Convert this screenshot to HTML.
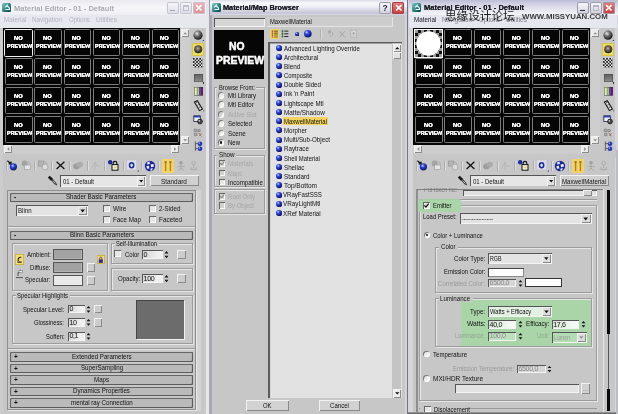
<!DOCTYPE html><html><head><meta charset="utf-8"><title>Material Editor</title><style>
html,body{margin:0;padding:0;}body{width:618px;height:414px;overflow:hidden;position:relative;background:#c7c7c7;font-family:"Liberation Sans","Noto Sans CJK SC",sans-serif;}
#r{position:absolute;left:0;top:0;width:618px;height:414px;overflow:hidden;filter:blur(0.45px);}
#r div,#r svg,#r span{position:absolute;}
.t{white-space:nowrap;transform-origin:0 50%;letter-spacing:0;}
</style></head><body><div id="r">
<div style="left:0px;top:0px;width:208px;height:414px;background:#cccccd;"></div>
<div style="left:3px;top:15px;width:202px;height:399px;background:#c7c7c7;"></div>
<div style="left:0px;top:0px;width:208px;height:15px;background:linear-gradient(#e9e9f0 0%,#f6f6fa 50%,#ededf3 100%);"></div>
<div style="left:2.3px;top:2.6px;width:9px;height:9px;background:linear-gradient(135deg,#7fd0c8,#1c6a68 70%,#0c3c3c);border-radius:1.5px;"></div>
<svg style="left:2.5px;top:3px" width="8.5" height="9" viewBox="0 0 9 9"><path d="M2.2 4.3 L4.5 2 L4.5 3.4 C6.6 3.4 7 4.6 7 6.6 L2.6 6.6" fill="none" stroke="#e8ffff" stroke-width="1.1"/></svg>
<span class="t" style="left:13.8px;top:3.52px;font-size:7.8px;line-height:9.36px;color:#a9a9b3;font-weight:bold;transform:scaleX(0.97);">Material Editor - 01 - Default</span>
<div style="left:167px;top:2px;width:11.6px;height:11.6px;background:linear-gradient(#f8f8fb,#dcdce8);border-radius:2px;box-shadow:inset 0 0 0 1px #c4c4cf;"></div>
<div style="left:169.6px;top:9.6px;width:5px;height:1.6px;background:#a0a0b0;"></div>
<div style="left:180px;top:2px;width:11.6px;height:11.6px;background:linear-gradient(#f8f8fb,#dcdce8);border-radius:2px;box-shadow:inset 0 0 0 1px #c4c4cf;"></div>
<div style="left:182.6px;top:4.6px;width:6.4px;height:6.4px;border:1px solid #c0c0cc;border-top-width:2px;box-sizing:border-box;"></div>
<div style="left:193.3px;top:2px;width:11.6px;height:11.6px;background:linear-gradient(#efb4b8,#e08e94);border-radius:2px;box-shadow:inset 0 0 0 1px #c4c4cf;"></div>
<svg style="left:193.3px;top:2px" width="11.6" height="11.6" viewBox="0 0 12 12"><path d="M3.2 3.2 L8.8 8.8 M8.8 3.2 L3.2 8.8" stroke="#fff" stroke-width="1.7" fill="none"/></svg>
<div style="left:0px;top:15px;width:208px;height:12.8px;background:#e7e7ee;"></div>
<span class="t" style="left:3.6px;top:16.46px;font-size:7.4px;line-height:8.88px;color:#b4b4c0;transform:scaleX(0.85);">Material</span>
<span class="t" style="left:32px;top:16.46px;font-size:7.4px;line-height:8.88px;color:#b4b4c0;transform:scaleX(0.86);">Navigation</span>
<span class="t" style="left:69px;top:16.46px;font-size:7.4px;line-height:8.88px;color:#b4b4c0;transform:scaleX(0.82);">Options</span>
<span class="t" style="left:96px;top:16.46px;font-size:7.4px;line-height:8.88px;color:#b4b4c0;transform:scaleX(0.88);">Utilities</span>
<div style="left:3px;top:28px;width:177px;height:116.6px;background:#050505;"></div>
<div style="left:4.2px;top:28.8px;width:29px;height:28.2px;border:1.3px solid #f0f0f0;box-sizing:border-box;border-radius:1.5px;"></div>
<span class="t" style="left:13.6px;top:35.26px;font-size:5.9px;line-height:7.08px;color:#f6f6f6;font-weight:bold;transform:scaleX(0.99);text-shadow:0 0 0.5px #fff,0 0 0.5px #fff;">NO</span>
<span class="t" style="left:6.6px;top:43.46px;font-size:5.9px;line-height:7.08px;color:#f6f6f6;font-weight:bold;transform:scaleX(0.93);text-shadow:0 0 0.5px #fff,0 0 0.5px #fff;">PREVIEW</span>
<div style="left:34.3px;top:29.3px;width:27.6px;height:27px;border:1px solid #7c7c7c;box-sizing:border-box;border-radius:1.5px;"></div>
<span class="t" style="left:42.9px;top:35.26px;font-size:5.9px;line-height:7.08px;color:#f6f6f6;font-weight:bold;transform:scaleX(0.99);text-shadow:0 0 0.5px #fff,0 0 0.5px #fff;">NO</span>
<span class="t" style="left:35.9px;top:43.46px;font-size:5.9px;line-height:7.08px;color:#f6f6f6;font-weight:bold;transform:scaleX(0.93);text-shadow:0 0 0.5px #fff,0 0 0.5px #fff;">PREVIEW</span>
<div style="left:63.6px;top:29.3px;width:27.6px;height:27px;border:1px solid #7c7c7c;box-sizing:border-box;border-radius:1.5px;"></div>
<span class="t" style="left:72.2px;top:35.26px;font-size:5.9px;line-height:7.08px;color:#f6f6f6;font-weight:bold;transform:scaleX(0.99);text-shadow:0 0 0.5px #fff,0 0 0.5px #fff;">NO</span>
<span class="t" style="left:65.2px;top:43.46px;font-size:5.9px;line-height:7.08px;color:#f6f6f6;font-weight:bold;transform:scaleX(0.93);text-shadow:0 0 0.5px #fff,0 0 0.5px #fff;">PREVIEW</span>
<div style="left:92.9px;top:29.3px;width:27.6px;height:27px;border:1px solid #7c7c7c;box-sizing:border-box;border-radius:1.5px;"></div>
<span class="t" style="left:101.5px;top:35.26px;font-size:5.9px;line-height:7.08px;color:#f6f6f6;font-weight:bold;transform:scaleX(0.99);text-shadow:0 0 0.5px #fff,0 0 0.5px #fff;">NO</span>
<span class="t" style="left:94.5px;top:43.46px;font-size:5.9px;line-height:7.08px;color:#f6f6f6;font-weight:bold;transform:scaleX(0.93);text-shadow:0 0 0.5px #fff,0 0 0.5px #fff;">PREVIEW</span>
<div style="left:122.2px;top:29.3px;width:27.6px;height:27px;border:1px solid #7c7c7c;box-sizing:border-box;border-radius:1.5px;"></div>
<span class="t" style="left:130.8px;top:35.26px;font-size:5.9px;line-height:7.08px;color:#f6f6f6;font-weight:bold;transform:scaleX(0.99);text-shadow:0 0 0.5px #fff,0 0 0.5px #fff;">NO</span>
<span class="t" style="left:123.8px;top:43.46px;font-size:5.9px;line-height:7.08px;color:#f6f6f6;font-weight:bold;transform:scaleX(0.93);text-shadow:0 0 0.5px #fff,0 0 0.5px #fff;">PREVIEW</span>
<div style="left:151.5px;top:29.3px;width:27.6px;height:27px;border:1px solid #7c7c7c;box-sizing:border-box;border-radius:1.5px;"></div>
<span class="t" style="left:160.1px;top:35.26px;font-size:5.9px;line-height:7.08px;color:#f6f6f6;font-weight:bold;transform:scaleX(0.99);text-shadow:0 0 0.5px #fff,0 0 0.5px #fff;">NO</span>
<span class="t" style="left:153.1px;top:43.46px;font-size:5.9px;line-height:7.08px;color:#f6f6f6;font-weight:bold;transform:scaleX(0.93);text-shadow:0 0 0.5px #fff,0 0 0.5px #fff;">PREVIEW</span>
<div style="left:5px;top:58.1px;width:27.6px;height:27px;border:1px solid #7c7c7c;box-sizing:border-box;border-radius:1.5px;"></div>
<span class="t" style="left:13.6px;top:64.06px;font-size:5.9px;line-height:7.08px;color:#f6f6f6;font-weight:bold;transform:scaleX(0.99);text-shadow:0 0 0.5px #fff,0 0 0.5px #fff;">NO</span>
<span class="t" style="left:6.6px;top:72.26px;font-size:5.9px;line-height:7.08px;color:#f6f6f6;font-weight:bold;transform:scaleX(0.93);text-shadow:0 0 0.5px #fff,0 0 0.5px #fff;">PREVIEW</span>
<div style="left:34.3px;top:58.1px;width:27.6px;height:27px;border:1px solid #7c7c7c;box-sizing:border-box;border-radius:1.5px;"></div>
<span class="t" style="left:42.9px;top:64.06px;font-size:5.9px;line-height:7.08px;color:#f6f6f6;font-weight:bold;transform:scaleX(0.99);text-shadow:0 0 0.5px #fff,0 0 0.5px #fff;">NO</span>
<span class="t" style="left:35.9px;top:72.26px;font-size:5.9px;line-height:7.08px;color:#f6f6f6;font-weight:bold;transform:scaleX(0.93);text-shadow:0 0 0.5px #fff,0 0 0.5px #fff;">PREVIEW</span>
<div style="left:63.6px;top:58.1px;width:27.6px;height:27px;border:1px solid #7c7c7c;box-sizing:border-box;border-radius:1.5px;"></div>
<span class="t" style="left:72.2px;top:64.06px;font-size:5.9px;line-height:7.08px;color:#f6f6f6;font-weight:bold;transform:scaleX(0.99);text-shadow:0 0 0.5px #fff,0 0 0.5px #fff;">NO</span>
<span class="t" style="left:65.2px;top:72.26px;font-size:5.9px;line-height:7.08px;color:#f6f6f6;font-weight:bold;transform:scaleX(0.93);text-shadow:0 0 0.5px #fff,0 0 0.5px #fff;">PREVIEW</span>
<div style="left:92.9px;top:58.1px;width:27.6px;height:27px;border:1px solid #7c7c7c;box-sizing:border-box;border-radius:1.5px;"></div>
<span class="t" style="left:101.5px;top:64.06px;font-size:5.9px;line-height:7.08px;color:#f6f6f6;font-weight:bold;transform:scaleX(0.99);text-shadow:0 0 0.5px #fff,0 0 0.5px #fff;">NO</span>
<span class="t" style="left:94.5px;top:72.26px;font-size:5.9px;line-height:7.08px;color:#f6f6f6;font-weight:bold;transform:scaleX(0.93);text-shadow:0 0 0.5px #fff,0 0 0.5px #fff;">PREVIEW</span>
<div style="left:122.2px;top:58.1px;width:27.6px;height:27px;border:1px solid #7c7c7c;box-sizing:border-box;border-radius:1.5px;"></div>
<span class="t" style="left:130.8px;top:64.06px;font-size:5.9px;line-height:7.08px;color:#f6f6f6;font-weight:bold;transform:scaleX(0.99);text-shadow:0 0 0.5px #fff,0 0 0.5px #fff;">NO</span>
<span class="t" style="left:123.8px;top:72.26px;font-size:5.9px;line-height:7.08px;color:#f6f6f6;font-weight:bold;transform:scaleX(0.93);text-shadow:0 0 0.5px #fff,0 0 0.5px #fff;">PREVIEW</span>
<div style="left:151.5px;top:58.1px;width:27.6px;height:27px;border:1px solid #7c7c7c;box-sizing:border-box;border-radius:1.5px;"></div>
<span class="t" style="left:160.1px;top:64.06px;font-size:5.9px;line-height:7.08px;color:#f6f6f6;font-weight:bold;transform:scaleX(0.99);text-shadow:0 0 0.5px #fff,0 0 0.5px #fff;">NO</span>
<span class="t" style="left:153.1px;top:72.26px;font-size:5.9px;line-height:7.08px;color:#f6f6f6;font-weight:bold;transform:scaleX(0.93);text-shadow:0 0 0.5px #fff,0 0 0.5px #fff;">PREVIEW</span>
<div style="left:5px;top:86.9px;width:27.6px;height:27px;border:1px solid #7c7c7c;box-sizing:border-box;border-radius:1.5px;"></div>
<span class="t" style="left:13.6px;top:92.86px;font-size:5.9px;line-height:7.08px;color:#f6f6f6;font-weight:bold;transform:scaleX(0.99);text-shadow:0 0 0.5px #fff,0 0 0.5px #fff;">NO</span>
<span class="t" style="left:6.6px;top:101.06px;font-size:5.9px;line-height:7.08px;color:#f6f6f6;font-weight:bold;transform:scaleX(0.93);text-shadow:0 0 0.5px #fff,0 0 0.5px #fff;">PREVIEW</span>
<div style="left:34.3px;top:86.9px;width:27.6px;height:27px;border:1px solid #7c7c7c;box-sizing:border-box;border-radius:1.5px;"></div>
<span class="t" style="left:42.9px;top:92.86px;font-size:5.9px;line-height:7.08px;color:#f6f6f6;font-weight:bold;transform:scaleX(0.99);text-shadow:0 0 0.5px #fff,0 0 0.5px #fff;">NO</span>
<span class="t" style="left:35.9px;top:101.06px;font-size:5.9px;line-height:7.08px;color:#f6f6f6;font-weight:bold;transform:scaleX(0.93);text-shadow:0 0 0.5px #fff,0 0 0.5px #fff;">PREVIEW</span>
<div style="left:63.6px;top:86.9px;width:27.6px;height:27px;border:1px solid #7c7c7c;box-sizing:border-box;border-radius:1.5px;"></div>
<span class="t" style="left:72.2px;top:92.86px;font-size:5.9px;line-height:7.08px;color:#f6f6f6;font-weight:bold;transform:scaleX(0.99);text-shadow:0 0 0.5px #fff,0 0 0.5px #fff;">NO</span>
<span class="t" style="left:65.2px;top:101.06px;font-size:5.9px;line-height:7.08px;color:#f6f6f6;font-weight:bold;transform:scaleX(0.93);text-shadow:0 0 0.5px #fff,0 0 0.5px #fff;">PREVIEW</span>
<div style="left:92.9px;top:86.9px;width:27.6px;height:27px;border:1px solid #7c7c7c;box-sizing:border-box;border-radius:1.5px;"></div>
<span class="t" style="left:101.5px;top:92.86px;font-size:5.9px;line-height:7.08px;color:#f6f6f6;font-weight:bold;transform:scaleX(0.99);text-shadow:0 0 0.5px #fff,0 0 0.5px #fff;">NO</span>
<span class="t" style="left:94.5px;top:101.06px;font-size:5.9px;line-height:7.08px;color:#f6f6f6;font-weight:bold;transform:scaleX(0.93);text-shadow:0 0 0.5px #fff,0 0 0.5px #fff;">PREVIEW</span>
<div style="left:122.2px;top:86.9px;width:27.6px;height:27px;border:1px solid #7c7c7c;box-sizing:border-box;border-radius:1.5px;"></div>
<span class="t" style="left:130.8px;top:92.86px;font-size:5.9px;line-height:7.08px;color:#f6f6f6;font-weight:bold;transform:scaleX(0.99);text-shadow:0 0 0.5px #fff,0 0 0.5px #fff;">NO</span>
<span class="t" style="left:123.8px;top:101.06px;font-size:5.9px;line-height:7.08px;color:#f6f6f6;font-weight:bold;transform:scaleX(0.93);text-shadow:0 0 0.5px #fff,0 0 0.5px #fff;">PREVIEW</span>
<div style="left:151.5px;top:86.9px;width:27.6px;height:27px;border:1px solid #7c7c7c;box-sizing:border-box;border-radius:1.5px;"></div>
<span class="t" style="left:160.1px;top:92.86px;font-size:5.9px;line-height:7.08px;color:#f6f6f6;font-weight:bold;transform:scaleX(0.99);text-shadow:0 0 0.5px #fff,0 0 0.5px #fff;">NO</span>
<span class="t" style="left:153.1px;top:101.06px;font-size:5.9px;line-height:7.08px;color:#f6f6f6;font-weight:bold;transform:scaleX(0.93);text-shadow:0 0 0.5px #fff,0 0 0.5px #fff;">PREVIEW</span>
<div style="left:5px;top:115.7px;width:27.6px;height:27px;border:1px solid #7c7c7c;box-sizing:border-box;border-radius:1.5px;"></div>
<span class="t" style="left:13.6px;top:121.66px;font-size:5.9px;line-height:7.08px;color:#f6f6f6;font-weight:bold;transform:scaleX(0.99);text-shadow:0 0 0.5px #fff,0 0 0.5px #fff;">NO</span>
<span class="t" style="left:6.6px;top:129.86px;font-size:5.9px;line-height:7.08px;color:#f6f6f6;font-weight:bold;transform:scaleX(0.93);text-shadow:0 0 0.5px #fff,0 0 0.5px #fff;">PREVIEW</span>
<div style="left:34.3px;top:115.7px;width:27.6px;height:27px;border:1px solid #7c7c7c;box-sizing:border-box;border-radius:1.5px;"></div>
<span class="t" style="left:42.9px;top:121.66px;font-size:5.9px;line-height:7.08px;color:#f6f6f6;font-weight:bold;transform:scaleX(0.99);text-shadow:0 0 0.5px #fff,0 0 0.5px #fff;">NO</span>
<span class="t" style="left:35.9px;top:129.86px;font-size:5.9px;line-height:7.08px;color:#f6f6f6;font-weight:bold;transform:scaleX(0.93);text-shadow:0 0 0.5px #fff,0 0 0.5px #fff;">PREVIEW</span>
<div style="left:63.6px;top:115.7px;width:27.6px;height:27px;border:1px solid #7c7c7c;box-sizing:border-box;border-radius:1.5px;"></div>
<span class="t" style="left:72.2px;top:121.66px;font-size:5.9px;line-height:7.08px;color:#f6f6f6;font-weight:bold;transform:scaleX(0.99);text-shadow:0 0 0.5px #fff,0 0 0.5px #fff;">NO</span>
<span class="t" style="left:65.2px;top:129.86px;font-size:5.9px;line-height:7.08px;color:#f6f6f6;font-weight:bold;transform:scaleX(0.93);text-shadow:0 0 0.5px #fff,0 0 0.5px #fff;">PREVIEW</span>
<div style="left:92.9px;top:115.7px;width:27.6px;height:27px;border:1px solid #7c7c7c;box-sizing:border-box;border-radius:1.5px;"></div>
<span class="t" style="left:101.5px;top:121.66px;font-size:5.9px;line-height:7.08px;color:#f6f6f6;font-weight:bold;transform:scaleX(0.99);text-shadow:0 0 0.5px #fff,0 0 0.5px #fff;">NO</span>
<span class="t" style="left:94.5px;top:129.86px;font-size:5.9px;line-height:7.08px;color:#f6f6f6;font-weight:bold;transform:scaleX(0.93);text-shadow:0 0 0.5px #fff,0 0 0.5px #fff;">PREVIEW</span>
<div style="left:122.2px;top:115.7px;width:27.6px;height:27px;border:1px solid #7c7c7c;box-sizing:border-box;border-radius:1.5px;"></div>
<span class="t" style="left:130.8px;top:121.66px;font-size:5.9px;line-height:7.08px;color:#f6f6f6;font-weight:bold;transform:scaleX(0.99);text-shadow:0 0 0.5px #fff,0 0 0.5px #fff;">NO</span>
<span class="t" style="left:123.8px;top:129.86px;font-size:5.9px;line-height:7.08px;color:#f6f6f6;font-weight:bold;transform:scaleX(0.93);text-shadow:0 0 0.5px #fff,0 0 0.5px #fff;">PREVIEW</span>
<div style="left:151.5px;top:115.7px;width:27.6px;height:27px;border:1px solid #7c7c7c;box-sizing:border-box;border-radius:1.5px;"></div>
<span class="t" style="left:160.1px;top:121.66px;font-size:5.9px;line-height:7.08px;color:#f6f6f6;font-weight:bold;transform:scaleX(0.99);text-shadow:0 0 0.5px #fff,0 0 0.5px #fff;">NO</span>
<span class="t" style="left:153.1px;top:129.86px;font-size:5.9px;line-height:7.08px;color:#f6f6f6;font-weight:bold;transform:scaleX(0.93);text-shadow:0 0 0.5px #fff,0 0 0.5px #fff;">PREVIEW</span>
<div style="left:3px;top:144.6px;width:203px;height:13px;background:#c7c7c7;"></div>
<div style="left:180.6px;top:28px;width:9px;height:116.6px;background:#cecece;"></div>
<div style="left:181px;top:29px;width:8.4px;height:8.4px;background:#ececec;box-shadow:inset 1px 1px 0 #f2f2f2,inset -1px -1px 0 #8a8a8a;"></div>
<div style="left:181px;top:136px;width:8.4px;height:8.4px;background:#ececec;box-shadow:inset 1px 1px 0 #f2f2f2,inset -1px -1px 0 #8a8a8a;"></div>
<svg style="left:181px;top:29px" width="8.4" height="8.4" viewBox="0 0 8 8"><path d="M2.2 5 L4 3 L5.8 5Z" fill="#888"/></svg>
<svg style="left:181px;top:136px" width="8.4" height="8.4" viewBox="0 0 8 8"><path d="M2.2 3 L4 5 L5.8 3Z" fill="#888"/></svg>
<div style="left:3px;top:145px;width:177px;height:8.6px;background:#cdcdcd;"></div>
<div style="left:4px;top:145.2px;width:8.4px;height:8.2px;background:#ececec;box-shadow:inset 1px 1px 0 #f2f2f2,inset -1px -1px 0 #8a8a8a;"></div>
<div style="left:171px;top:145.2px;width:8.4px;height:8.2px;background:#ececec;box-shadow:inset 1px 1px 0 #f2f2f2,inset -1px -1px 0 #8a8a8a;"></div>
<svg style="left:4px;top:145.2px" width="8.4" height="8.2" viewBox="0 0 8 8"><path d="M5 2.2 L3 4 L5 5.8Z" fill="#888"/></svg>
<svg style="left:171px;top:145.2px" width="8.4" height="8.2" viewBox="0 0 8 8"><path d="M3 2.2 L5 4 L3 5.8Z" fill="#888"/></svg>
<svg style="left:191.5px;top:29.5px" width="14" height="14" viewBox="0 0 14 14"><defs><radialGradient id="sg0" cx="0.38" cy="0.32" r="0.7"><stop offset="0" stop-color="#e8e8e8"/><stop offset="0.45" stop-color="#6a6a6a"/><stop offset="1" stop-color="#161616"/></radialGradient></defs><circle cx="6" cy="5.2" r="4.6" fill="url(#sg0)"/><path d="M10.4 11 L11.8 11 L11.8 9.6Z" fill="#222"/></svg>
<div style="left:191.8px;top:43.2px;width:12.4px;height:12.4px;background:#eadf64;box-shadow:inset 0 0 0 1px #d4c440;border-radius:1px;"></div>
<svg style="left:191.8px;top:43px" width="13" height="13" viewBox="0 0 13 13"><defs><radialGradient id="sh0" cx="0.45" cy="0.4" r="0.65"><stop offset="0" stop-color="#c8a890"/><stop offset="0.5" stop-color="#5a5050"/><stop offset="1" stop-color="#141414"/></radialGradient></defs><circle cx="6.2" cy="6.2" r="4" fill="url(#sh0)"/></svg>
<svg style="left:193.3px;top:58.2px" width="9.6" height="9.6" viewBox="0 0 12 12"><defs><pattern id="cb0" width="4" height="4" patternUnits="userSpaceOnUse"><rect width="4" height="4" fill="#f4f4f4"/><rect width="2" height="2" fill="#111"/><rect x="2" y="2" width="2" height="2" fill="#111"/></pattern></defs><rect width="12" height="12" fill="url(#cb0)"/></svg>
<div style="left:193.5px;top:74px;width:9.6px;height:7.6px;background:linear-gradient(#5e5e5e,#8e8e8e);box-shadow:inset 0 0 0 0.6px #4a4a4a;"></div>
<div style="left:203.1px;top:82.4px;width:1.4px;height:1.4px;background:#333;"></div>
<svg style="left:193.5px;top:87.4px" width="9.6" height="8.6" viewBox="0 0 12 11"><rect width="12" height="11" fill="#333"/><rect x="0.5" y="0.5" width="2" height="10" fill="#e8e8d0"/><rect x="2.5" y="0.5" width="2" height="10" fill="#d8e070"/><rect x="4.5" y="0.5" width="2" height="10" fill="#70d890"/><rect x="6.5" y="0.5" width="2.5" height="10" fill="#8830a0"/><rect x="9" y="0.5" width="2.5" height="10" fill="#5a2078"/></svg>
<svg style="left:192.5px;top:100px" width="12" height="12" viewBox="0 0 14 14"><path d="M1.6 2.4 L5 0.8 L11 10.6 L7.6 12.4Z" fill="#e8e8e8" stroke="#181818" stroke-width="1.3"/><path d="M3.6 3.4 L5 2.8 M5.2 6 L6.6 5.4 M6.8 8.6 L8.2 8" stroke="#181818" stroke-width="1"/><path d="M11.6 13.2 L13 13.2 L13 11.8Z" fill="#222"/></svg>
<svg style="left:193.3px;top:115.4px" width="10.6" height="9.8" viewBox="0 0 13 12"><rect x="1" y="1" width="8" height="7" fill="#eef" stroke="#223" stroke-width="1"/><rect x="1" y="1" width="8" height="2" fill="#2840b0"/><circle cx="8.6" cy="8" r="3" fill="#444" stroke="#111" stroke-width="0.8"/><circle cx="7.8" cy="7.2" r="1" fill="#ccc"/></svg>
<svg style="left:193.3px;top:128.4px" width="10.4" height="9.6" viewBox="0 0 13 12"><path d="M1.5 1.5 h3 v3 h-3z M6 2 h3 v2.4 h-3z M2 6.6 h3 v3 h-3z" fill="#b8b8b8" stroke="#666" stroke-width="0.7"/><path d="M7 6 L10.6 10.6 M10.6 6.6 L8 9.6" stroke="#a04848" stroke-width="0.9"/></svg>
<svg style="left:192px;top:139.5px" width="12" height="13" viewBox="0 0 12 13"><path d="M3.4 1.5 V11 M3.4 3.6 H7 M3.4 8.6 H7" stroke="#555" stroke-width="0.9" fill="none"/><circle cx="8" cy="3.8" r="2.3" fill="#2036c0"/><circle cx="8" cy="8.8" r="2.3" fill="#2036c0"/><circle cx="7.3" cy="3.1" r="0.8" fill="#a8b4ff"/><circle cx="7.3" cy="8.1" r="0.8" fill="#a8b4ff"/></svg>
<div style="left:6px;top:160.6px;width:1px;height:10px;background:#aeaeae;"></div>
<div style="left:7px;top:160.6px;width:1px;height:10px;background:#dcdcdc;"></div>
<svg style="left:5.5px;top:158.5px" width="13" height="14" viewBox="0 0 13 14"><defs><radialGradient id="bs0" cx="0.4" cy="0.35" r="0.7"><stop offset="0" stop-color="#b8c8ff"/><stop offset="0.4" stop-color="#2440d8"/><stop offset="1" stop-color="#0a1260"/></radialGradient></defs><circle cx="7.4" cy="7.8" r="3.6" fill="url(#bs0)"/><path d="M1.4 1.8 L4.8 4.8 M5 2.6 L5 5 L2.6 5" stroke="#111" stroke-width="1.2" fill="none"/></svg>
<svg style="left:19.5px;top:159px" width="13" height="13" viewBox="0 0 13 13"><circle cx="4.6" cy="4.4" r="3" fill="#a4a4a4"/><rect x="4.6" y="6" width="6" height="4.6" fill="#e4e4e4" stroke="#a0a0a0" stroke-width="0.7"/><path d="M8 2.4 L10.6 5" stroke="#a0a0a0" stroke-width="1"/></svg>
<div style="left:33.5px;top:160.6px;width:1px;height:10px;background:#aeaeae;"></div>
<div style="left:34.5px;top:160.6px;width:1px;height:10px;background:#dcdcdc;"></div>
<svg style="left:36.5px;top:159px" width="13" height="13" viewBox="0 0 13 13"><rect x="1.4" y="2" width="5" height="5" fill="#b4b4b4" stroke="#999" stroke-width="0.7"/><circle cx="8" cy="8" r="3" fill="#dcdcdc" stroke="#a0a0a0" stroke-width="0.8"/><path d="M6.4 2.6 C9 2.6 9.6 4 9.4 5.4" stroke="#a0a0a0" stroke-width="0.8" fill="none"/></svg>
<div style="left:51px;top:160.6px;width:1px;height:10px;background:#aeaeae;"></div>
<div style="left:52px;top:160.6px;width:1px;height:10px;background:#dcdcdc;"></div>
<svg style="left:54.5px;top:160px" width="11" height="11" viewBox="0 0 11 11"><path d="M1.6 1.8 L9.4 9 M9.4 1.8 L1.6 9" stroke="#111" stroke-width="1.25"/></svg>
<div style="left:69px;top:160.6px;width:1px;height:10px;background:#aeaeae;"></div>
<div style="left:70px;top:160.6px;width:1px;height:10px;background:#dcdcdc;"></div>
<svg style="left:72px;top:160px" width="12" height="11" viewBox="0 0 12 11"><ellipse cx="4.4" cy="6.4" rx="3.2" ry="2.8" fill="#9c9c9c"/><ellipse cx="7.6" cy="4.6" rx="3.2" ry="2.8" fill="#aaaaaa"/></svg>
<div style="left:87px;top:160.6px;width:1px;height:10px;background:#aeaeae;"></div>
<div style="left:88px;top:160.6px;width:1px;height:10px;background:#dcdcdc;"></div>
<svg style="left:90px;top:160px" width="12" height="11" viewBox="0 0 12 11"><path d="M1.4 9 L5 2 L7 6 L10.4 6 M5 2 L5 9.6" stroke="#b4b4b4" stroke-width="0.9" fill="none"/></svg>
<div style="left:104px;top:160.6px;width:1px;height:10px;background:#aeaeae;"></div>
<div style="left:105px;top:160.6px;width:1px;height:10px;background:#dcdcdc;"></div>
<svg style="left:107px;top:159px" width="13" height="13" viewBox="0 0 13 13"><circle cx="3.2" cy="3.2" r="2.2" fill="#1a2a9c"/><rect x="5" y="5.6" width="6" height="5.6" fill="#f4f4f4" stroke="#111" stroke-width="1"/><path d="M6.2 5.6 V4 C6.2 1.8 9.8 1.8 9.8 4 V5.6" stroke="#111" stroke-width="1.1" fill="none"/><rect x="6.6" y="7.4" width="3" height="2" fill="#e8d060"/></svg>
<div style="left:123px;top:160.6px;width:1px;height:10px;background:#aeaeae;"></div>
<div style="left:124px;top:160.6px;width:1px;height:10px;background:#dcdcdc;"></div>
<svg style="left:126px;top:159px" width="14" height="13" viewBox="0 0 14 13"><rect x="0.6" y="1" width="10" height="10" fill="#dedee8" stroke="#c0c0cc" stroke-width="0.6"/><ellipse cx="5.6" cy="6.2" rx="2.1" ry="2.5" fill="none" stroke="#1a2a9c" stroke-width="1.5"/><path d="M11.4 12.4 L12.8 12.4 L12.8 11Z" fill="#222"/></svg>
<div style="left:141px;top:160.6px;width:1px;height:10px;background:#aeaeae;"></div>
<div style="left:142px;top:160.6px;width:1px;height:10px;background:#dcdcdc;"></div>
<svg style="left:143.5px;top:159.5px" width="12" height="12" viewBox="0 0 12 12"><circle cx="6" cy="6" r="5.2" fill="#1c2aa0"/><path d="M3 2.4 L5.6 1.6 L5.8 4 L3.4 4.6Z M6.6 4.6 L9.4 4 L10 6.4 L7 7.2Z M2.4 6.2 L4.8 5.8 L5.4 8.6 L3 8.8Z M6.6 8.6 L8.8 8.2 L8 10.4 L6.4 10.8Z" fill="#f0f0ff"/></svg>
<div style="left:158px;top:160.6px;width:1px;height:10px;background:#aeaeae;"></div>
<div style="left:159px;top:160.6px;width:1px;height:10px;background:#dcdcdc;"></div>
<div style="left:161.6px;top:158.6px;width:12px;height:14px;background:#f3d368;"></div>
<svg style="left:161.6px;top:158.6px" width="12" height="14" viewBox="0 0 12 14"><path d="M3.6 2.6 V12 M8.4 2.6 V12" stroke="#b08418" stroke-width="1.4"/><path d="M2.4 3 H4.8 M7.2 3 H9.6" stroke="#7a5a10" stroke-width="1"/></svg>
<svg style="left:175.5px;top:159.5px" width="11" height="12" viewBox="0 0 11 12"><circle cx="5" cy="2.8" r="1.8" fill="#a0a0a0"/><path d="M5 4.6 V8 M5 8 L2.4 10.8 M5 8 L8 10.6 M1.6 6.4 H8.8" stroke="#a8a8a8" stroke-width="1" fill="none"/></svg>
<svg style="left:188px;top:159.5px" width="11" height="12" viewBox="0 0 11 12"><circle cx="5.6" cy="3" r="1.8" fill="none" stroke="#aaa" stroke-width="0.9"/><path d="M5.6 5 V8 M1.6 9.4 H9.6 M3 7 C3 11 8.4 11 8.4 7" stroke="#aaa" stroke-width="0.9" fill="none"/></svg>
<svg style="left:46.5px;top:175px" width="11" height="12" viewBox="0 0 11 12"><path d="M0.8 2.6 L2.8 0.8 L6.2 4 L4.2 6Z" fill="#1a1a1a"/><path d="M4.8 4.6 L8.8 9" stroke="#3a3a3a" stroke-width="2.2"/><path d="M5.8 5.6 L8.4 8.4" stroke="#e4e4e4" stroke-width="0.8"/><path d="M8.6 8.8 L9.9 10.2" stroke="#333" stroke-width="1.1"/></svg>
<div style="left:60px;top:175px;width:86px;height:12px;background:#e6e6e6;box-shadow:inset 1px 1px 0 #555,inset -1px -1px 0 #f4f4f4;"></div>
<span class="t" style="left:62.5px;top:176.64px;font-size:7.6px;line-height:9.12px;color:#111;transform:scaleX(0.79);">01 - Default</span>
<div style="left:137px;top:176px;width:8.4px;height:10px;background:#e2e2e2;box-shadow:inset 1px 1px 0 #f2f2f2,inset -1px -1px 0 #8a8a8a;"></div>
<svg style="left:137px;top:176px" width="8.4" height="10" viewBox="0 0 8 10"><path d="M2 4 L6 4 L4 6.6Z" fill="#111"/></svg>
<div style="left:149.7px;top:175.4px;width:49px;height:11px;background:#d0d0d0;box-shadow:inset 1px 1px 0 #f2f2f2,inset -1px -1px 0 #8a8a8a;"></div>
<span class="t" style="left:161.2px;top:176.54px;font-size:7.6px;line-height:9.12px;color:#111;transform:scaleX(0.84);">Standard</span>
<div style="left:6.6px;top:189.5px;width:189px;height:220px;border:1px solid #8e8e8e;box-sizing:border-box;box-shadow:1px 1px 0 #e8e8e8;"></div>
<div style="left:196.5px;top:189.5px;width:4px;height:221px;background:#d4d4d4;"></div>
<div style="left:10px;top:192.6px;width:183.4px;height:9.2px;background:#bababa;box-shadow:inset 1.1px 1.1px 0 #666,inset -1.1px -1.1px 0 #5c5c5c;border-radius:1px;"></div>
<span class="t" style="left:66.42px;top:192.94px;font-size:7.1px;line-height:8.52px;color:#111;transform:scaleX(0.87);">Shader Basic Parameters</span>
<span class="t" style="left:14px;top:193.3px;font-size:6.5px;line-height:7.8px;color:#111;font-weight:bold;">-</span>
<div style="left:16px;top:205px;width:72px;height:11.4px;background:#e4e4e4;box-shadow:inset 1px 1px 0 #555,inset -1px -1px 0 #f4f4f4;"></div>
<span class="t" style="left:18px;top:206.34px;font-size:7.6px;line-height:9.12px;color:#111;transform:scaleX(0.8);">Blinn</span>
<div style="left:77.6px;top:206px;width:9.4px;height:9.4px;background:#dcdcdc;box-shadow:inset 1px 1px 0 #f2f2f2,inset -1px -1px 0 #8a8a8a;"></div>
<svg style="left:77.6px;top:206px" width="9.4" height="9.4" viewBox="0 0 8 8"><path d="M2 3 L6 3 L4 5.6Z" fill="#111"/></svg>
<div style="left:103px;top:204.6px;width:7px;height:7px;background:#e6e6e6;box-shadow:inset 1px 1px 0 #666,inset -1px -1px 0 #fafafa;"></div>
<span class="t" style="left:113px;top:204.04px;font-size:7.6px;line-height:9.12px;color:#111;transform:scaleX(0.86);">Wire</span>
<div style="left:149px;top:204.6px;width:7px;height:7px;background:#e6e6e6;box-shadow:inset 1px 1px 0 #666,inset -1px -1px 0 #fafafa;"></div>
<span class="t" style="left:158.5px;top:204.04px;font-size:7.6px;line-height:9.12px;color:#111;transform:scaleX(0.82);">2-Sided</span>
<div style="left:103px;top:215.8px;width:7px;height:7px;background:#e6e6e6;box-shadow:inset 1px 1px 0 #666,inset -1px -1px 0 #fafafa;"></div>
<span class="t" style="left:113px;top:215.24px;font-size:7.6px;line-height:9.12px;color:#111;transform:scaleX(0.83);">Face Map</span>
<div style="left:149px;top:215.8px;width:7px;height:7px;background:#e6e6e6;box-shadow:inset 1px 1px 0 #666,inset -1px -1px 0 #fafafa;"></div>
<span class="t" style="left:158.5px;top:215.24px;font-size:7.6px;line-height:9.12px;color:#111;transform:scaleX(0.84);">Faceted</span>
<div style="left:8px;top:226.4px;width:187px;height:1px;background:#9a9a9a;"></div>
<div style="left:8px;top:227.4px;width:187px;height:1px;background:#e6e6e6;"></div>
<div style="left:10px;top:230.6px;width:183.4px;height:9.2px;background:#bababa;box-shadow:inset 1.1px 1.1px 0 #666,inset -1.1px -1.1px 0 #5c5c5c;border-radius:1px;"></div>
<span class="t" style="left:69.52px;top:230.94px;font-size:7.1px;line-height:8.52px;color:#111;transform:scaleX(0.87);">Blinn Basic Parameters</span>
<span class="t" style="left:14px;top:231.3px;font-size:6.5px;line-height:7.8px;color:#111;font-weight:bold;">-</span>
<div style="left:12px;top:243px;width:96px;height:48px;border:1px solid #9c9c9c;box-sizing:border-box;box-shadow:1px 1px 0 #e6e6e6, inset 1px 1px 0 #e6e6e6;"></div>
<div style="left:15px;top:253.6px;width:8.6px;height:11.6px;background:#f4de74;box-shadow:inset 0 0 0 0.7px #c8a838;"></div>
<svg style="left:15px;top:253.6px" width="8.6" height="11.4" viewBox="0 0 9 11"><path d="M6.6 3 C3.6 2.6 3 5 3.4 7 M2.6 8 H7" stroke="#222" stroke-width="1.2" fill="none"/></svg>
<svg style="left:14.6px;top:268px" width="9" height="12" viewBox="0 0 9 12"><path d="M5.6 1.6 V4.6 H3 V8 M1 9.6 H8" stroke="#555" stroke-width="1" fill="none"/><rect x="4" y="2.4" width="3.4" height="2.4" fill="#eee" stroke="#666" stroke-width="0.5"/></svg>
<span class="t" style="left:26.6px;top:249.84px;font-size:7.6px;line-height:9.12px;color:#111;transform:scaleX(0.8);">Ambient:</span>
<span class="t" style="left:30.1px;top:262.64px;font-size:7.6px;line-height:9.12px;color:#111;transform:scaleX(0.8);">Diffuse:</span>
<span class="t" style="left:25.1px;top:274.94px;font-size:7.6px;line-height:9.12px;color:#111;transform:scaleX(0.79);">Specular:</span>
<div style="left:53.3px;top:249px;width:30px;height:11px;background:#a2a2a2;box-shadow:inset 0 0 0 1px #555, inset -1.6px -1.6px 0 0 rgba(255,255,255,.35);"></div>
<div style="left:53.3px;top:261.8px;width:30px;height:11px;background:#a2a2a2;box-shadow:inset 0 0 0 1px #555, inset -1.6px -1.6px 0 0 rgba(255,255,255,.35);"></div>
<div style="left:53.3px;top:275px;width:30px;height:11px;background:#e9e9e9;box-shadow:inset 0 0 0 1px #555, inset -1.6px -1.6px 0 0 rgba(255,255,255,.35);"></div>
<div style="left:87px;top:263.2px;width:7.6px;height:9px;background:#cccccc;box-shadow:inset 1px 1px 0 #f2f2f2,inset -1px -1px 0 #8a8a8a;"></div>
<div style="left:87px;top:276.4px;width:7.6px;height:9px;background:#cccccc;box-shadow:inset 1px 1px 0 #f2f2f2,inset -1px -1px 0 #8a8a8a;"></div>
<div style="left:96.8px;top:255px;width:8.4px;height:9px;background:#f4de74;box-shadow:inset 0 0 0 0.7px #c8a838;"></div>
<svg style="left:97.2px;top:254.8px" width="7.6" height="9.4" viewBox="0 0 8 10"><rect x="1.8" y="4.6" width="4.4" height="3.8" fill="#2a2aa0"/><path d="M2.8 4.6 V3.4 C2.8 1.8 5.2 1.8 5.2 3.4 V4.6" stroke="#2a2aa0" stroke-width="0.9" fill="none"/></svg>
<div style="left:110.8px;top:243px;width:82px;height:21.4px;border:1px solid #9c9c9c;box-sizing:border-box;box-shadow:1px 1px 0 #e6e6e6, inset 1px 1px 0 #e6e6e6;"></div>
<div style="left:114.5px;top:240px;width:44px;height:7px;background:#c7c7c7;"></div>
<span class="t" style="left:116px;top:238.84px;font-size:7.6px;line-height:9.12px;color:#111;transform:scaleX(0.76);">Self-Illumination</span>
<div style="left:114px;top:250.4px;width:7px;height:7px;background:#e6e6e6;box-shadow:inset 1px 1px 0 #666,inset -1px -1px 0 #fafafa;"></div>
<span class="t" style="left:125px;top:250.04px;font-size:7.6px;line-height:9.12px;color:#111;transform:scaleX(0.79);">Color</span>
<div style="left:142px;top:250px;width:20.6px;height:9.4px;background:linear-gradient(90deg,#d2d2d2,#f0f0f0 75%);box-shadow:inset 1px 1px 0 #555,inset -1px -1px 0 #f4f4f4;"></div>
<span class="t" style="left:143.6px;top:250.74px;font-size:7.1px;line-height:8.52px;color:#111;letter-spacing:-0.35px;">0</span>
<svg style="left:164.1px;top:250px" width="5" height="9.4" viewBox="0 0 5 9" preserveAspectRatio="none"><path d="M0.6 3.4 L2.5 1 L4.4 3.4Z M0.6 5.6 L2.5 8 L4.4 5.6Z" fill="#111"/></svg>
<div style="left:177px;top:250px;width:9px;height:9.4px;background:#cccccc;box-shadow:inset 1px 1px 0 #f2f2f2,inset -1px -1px 0 #8a8a8a;"></div>
<div style="left:110.8px;top:267.6px;width:82px;height:23.4px;border:1px solid #9c9c9c;box-sizing:border-box;box-shadow:1px 1px 0 #e6e6e6, inset 1px 1px 0 #e6e6e6;"></div>
<span class="t" style="left:118px;top:273.84px;font-size:7.6px;line-height:9.12px;color:#111;transform:scaleX(0.8);">Opacity:</span>
<div style="left:142px;top:273.8px;width:20.6px;height:9.4px;background:linear-gradient(90deg,#d2d2d2,#f0f0f0 75%);box-shadow:inset 1px 1px 0 #555,inset -1px -1px 0 #f4f4f4;"></div>
<span class="t" style="left:143.6px;top:274.54px;font-size:7.1px;line-height:8.52px;color:#111;letter-spacing:-0.35px;">100</span>
<svg style="left:164.1px;top:273.8px" width="5" height="9.4" viewBox="0 0 5 9" preserveAspectRatio="none"><path d="M0.6 3.4 L2.5 1 L4.4 3.4Z M0.6 5.6 L2.5 8 L4.4 5.6Z" fill="#111"/></svg>
<div style="left:177px;top:274px;width:9px;height:9.4px;background:#cccccc;box-shadow:inset 1px 1px 0 #f2f2f2,inset -1px -1px 0 #8a8a8a;"></div>
<div style="left:12px;top:295.4px;width:181px;height:49px;border:1px solid #9c9c9c;box-sizing:border-box;box-shadow:1px 1px 0 #e6e6e6, inset 1px 1px 0 #e6e6e6;"></div>
<div style="left:15.5px;top:292px;width:54px;height:7px;background:#c7c7c7;"></div>
<span class="t" style="left:17px;top:291.04px;font-size:7.6px;line-height:9.12px;color:#111;transform:scaleX(0.78);">Specular Highlights</span>
<span class="t" style="left:23px;top:304.64px;font-size:7.6px;line-height:9.12px;color:#111;transform:scaleX(0.79);">Specular Level:</span>
<div style="left:67.8px;top:304.6px;width:17px;height:8.8px;background:linear-gradient(90deg,#d2d2d2,#f0f0f0 75%);box-shadow:inset 1px 1px 0 #555,inset -1px -1px 0 #f4f4f4;"></div>
<span class="t" style="left:69.4px;top:305.04px;font-size:7.1px;line-height:8.52px;color:#111;letter-spacing:-0.35px;">0</span>
<svg style="left:86.3px;top:304.6px" width="5" height="8.8" viewBox="0 0 5 9" preserveAspectRatio="none"><path d="M0.6 3.4 L2.5 1 L4.4 3.4Z M0.6 5.6 L2.5 8 L4.4 5.6Z" fill="#111"/></svg>
<div style="left:94px;top:304.6px;width:8px;height:8.8px;background:#cccccc;box-shadow:inset 1px 1px 0 #f2f2f2,inset -1px -1px 0 #8a8a8a;"></div>
<span class="t" style="left:34.4px;top:318.24px;font-size:7.6px;line-height:9.12px;color:#111;transform:scaleX(0.76);">Glossiness:</span>
<div style="left:67.8px;top:318.2px;width:17px;height:8.8px;background:linear-gradient(90deg,#d2d2d2,#f0f0f0 75%);box-shadow:inset 1px 1px 0 #555,inset -1px -1px 0 #f4f4f4;"></div>
<span class="t" style="left:69.4px;top:318.64px;font-size:7.1px;line-height:8.52px;color:#111;letter-spacing:-0.35px;">10</span>
<svg style="left:86.3px;top:318.2px" width="5" height="8.8" viewBox="0 0 5 9" preserveAspectRatio="none"><path d="M0.6 3.4 L2.5 1 L4.4 3.4Z M0.6 5.6 L2.5 8 L4.4 5.6Z" fill="#111"/></svg>
<div style="left:94px;top:318.2px;width:8px;height:8.8px;background:#cccccc;box-shadow:inset 1px 1px 0 #f2f2f2,inset -1px -1px 0 #8a8a8a;"></div>
<span class="t" style="left:45.8px;top:331.84px;font-size:7.6px;line-height:9.12px;color:#111;transform:scaleX(0.77);">Soften:</span>
<div style="left:67.8px;top:332px;width:17px;height:8.8px;background:linear-gradient(90deg,#d2d2d2,#f0f0f0 75%);box-shadow:inset 1px 1px 0 #555,inset -1px -1px 0 #f4f4f4;"></div>
<span class="t" style="left:69.4px;top:332.44px;font-size:7.1px;line-height:8.52px;color:#111;letter-spacing:-0.35px;">0,1</span>
<svg style="left:86.3px;top:332px" width="5" height="8.8" viewBox="0 0 5 9" preserveAspectRatio="none"><path d="M0.6 3.4 L2.5 1 L4.4 3.4Z M0.6 5.6 L2.5 8 L4.4 5.6Z" fill="#111"/></svg>
<div style="left:135.8px;top:300.4px;width:48.6px;height:39px;background:#6c6c6c;box-shadow:inset 1px 1px 0 #444, 1px 1px 0 #f0f0f0;"></div>
<div style="left:8px;top:348px;width:187px;height:1px;background:#9a9a9a;"></div>
<div style="left:8px;top:349px;width:187px;height:1px;background:#e6e6e6;"></div>
<div style="left:10px;top:352.4px;width:183.4px;height:9.2px;background:#bababa;box-shadow:inset 1.1px 1.1px 0 #666,inset -1.1px -1.1px 0 #5c5c5c;border-radius:1px;"></div>
<span class="t" style="left:71.75px;top:352.74px;font-size:7.1px;line-height:8.52px;color:#111;transform:scaleX(0.87);">Extended Parameters</span>
<span class="t" style="left:14px;top:353.1px;font-size:6.5px;line-height:7.8px;color:#111;font-weight:bold;">+</span>
<div style="left:10px;top:363.9px;width:183.4px;height:9.2px;background:#bababa;box-shadow:inset 1.1px 1.1px 0 #666,inset -1.1px -1.1px 0 #5c5c5c;border-radius:1px;"></div>
<span class="t" style="left:80.53px;top:364.24px;font-size:7.1px;line-height:8.52px;color:#111;transform:scaleX(0.87);">SuperSampling</span>
<span class="t" style="left:14px;top:364.6px;font-size:6.5px;line-height:7.8px;color:#111;font-weight:bold;">+</span>
<div style="left:10px;top:375.4px;width:183.4px;height:9.2px;background:#bababa;box-shadow:inset 1.1px 1.1px 0 #666,inset -1.1px -1.1px 0 #5c5c5c;border-radius:1px;"></div>
<span class="t" style="left:94.13px;top:375.74px;font-size:7.1px;line-height:8.52px;color:#111;transform:scaleX(0.87);">Maps</span>
<span class="t" style="left:14px;top:376.1px;font-size:6.5px;line-height:7.8px;color:#111;font-weight:bold;">+</span>
<div style="left:10px;top:386.9px;width:183.4px;height:9.2px;background:#bababa;box-shadow:inset 1.1px 1.1px 0 #666,inset -1.1px -1.1px 0 #5c5c5c;border-radius:1px;"></div>
<span class="t" style="left:73.14px;top:387.24px;font-size:7.1px;line-height:8.52px;color:#111;transform:scaleX(0.87);">Dynamics Properties</span>
<span class="t" style="left:14px;top:387.6px;font-size:6.5px;line-height:7.8px;color:#111;font-weight:bold;">+</span>
<div style="left:10px;top:398.4px;width:183.4px;height:9.2px;background:#bababa;box-shadow:inset 1.1px 1.1px 0 #666,inset -1.1px -1.1px 0 #5c5c5c;border-radius:1px;"></div>
<span class="t" style="left:70.72px;top:398.74px;font-size:7.1px;line-height:8.52px;color:#111;transform:scaleX(0.87);">mental ray Connection</span>
<span class="t" style="left:14px;top:399.1px;font-size:6.5px;line-height:7.8px;color:#111;font-weight:bold;">+</span>
<div style="left:206.4px;top:0px;width:203px;height:414px;background:#e6e6ea;"></div>
<div style="left:209.4px;top:0px;width:198px;height:414px;background:#d2d2da;"></div>
<div style="left:209px;top:0px;width:199px;height:15px;background:linear-gradient(#dcdce6 0%,#f8f8fc 20%,#eeeef5 45%,#c4c4d8 88%,#dcdce8 100%);"></div>
<div style="left:211.6px;top:15px;width:193.4px;height:399px;background:#c7c7c7;"></div>
<div style="left:209.2px;top:15px;width:2.4px;height:399px;background:#a8a8b8;"></div>
<div style="left:208.8px;top:0px;width:1.5px;height:15px;background:#9c9cb2;"></div>
<div style="left:404.8px;top:15px;width:2px;height:399px;background:#d4d4d8;"></div>
<div style="left:212px;top:3px;width:8.6px;height:9px;background:linear-gradient(135deg,#7fd0c8,#1c6a68 70%,#0c3c3c);border-radius:1.5px;"></div>
<svg style="left:212px;top:3px" width="8.6" height="9" viewBox="0 0 9 9"><path d="M2.2 4.3 L4.5 2 L4.5 3.4 C6.6 3.4 7 4.6 7 6.6 L2.6 6.6" fill="none" stroke="#e8ffff" stroke-width="1.1"/></svg>
<span class="t" style="left:223px;top:3.12px;font-size:7.8px;line-height:9.36px;color:#1c1c24;font-weight:bold;transform:scaleX(0.94);text-shadow:0 0 0.5px #1c1c24;">Material/Map Browser</span>
<div style="left:379.4px;top:2px;width:11.6px;height:11.6px;background:linear-gradient(#fbfbfd,#d0d0dc);border-radius:2px;box-shadow:inset 0 0 0 1px #9a9aa8;"></div>
<span class="t" style="left:382.6px;top:2.9px;font-size:8.5px;line-height:10.2px;color:#2a2a50;font-weight:bold;">?</span>
<div style="left:392.4px;top:2px;width:12px;height:11.6px;background:linear-gradient(#e88080,#cc3838);border-radius:2px;box-shadow:inset 0 0 0 1px #a04040;"></div>
<svg style="left:392.6px;top:2px" width="11.6" height="11.6" viewBox="0 0 12 12"><path d="M3.2 3.2 L8.8 8.8 M8.8 3.2 L3.2 8.8" stroke="#fff" stroke-width="1.7" fill="none"/></svg>
<div style="left:214.2px;top:17.6px;width:50.4px;height:9.4px;background:#d6d6d6;box-shadow:inset 1px 1px 0 #555,inset -1px -1px 0 #f4f4f4;"></div>
<div style="left:267px;top:17px;width:126px;height:9.6px;background:#cdcdcd;box-shadow:inset -1px -1px 0 #e4e4e4;"></div>
<span class="t" style="left:270px;top:17.24px;font-size:7.6px;line-height:9.12px;color:#111;transform:scaleX(0.77);">MaxwellMaterial</span>
<div style="left:214.2px;top:30.3px;width:49.5px;height:48.5px;background:#060606;"></div>
<span class="t" style="left:229.05px;top:40.8px;font-size:10px;line-height:12px;color:#fff;font-weight:bold;transform:scaleX(1.03);-webkit-text-stroke:0.5px #fff;">NO</span>
<span class="t" style="left:216px;top:54.5px;font-size:10px;line-height:12px;color:#fff;font-weight:bold;transform:scaleX(1.04);-webkit-text-stroke:0.5px #fff;">PREVIEW</span>
<div style="left:269.6px;top:29.2px;width:9.6px;height:9.8px;background:#f0d468;"></div>
<svg style="left:269.6px;top:29.2px" width="9.6" height="9.8" viewBox="0 0 10 11"><path d="M1.6 2.4 h1.6 M1.6 4.6 h1.6 M1.6 6.8 h1.6 M1.6 9 h1.6" stroke="#a03020" stroke-width="1.3"/><path d="M4.2 2.4 h4.4 M4.2 4.6 h4.4 M4.2 6.8 h4.4 M4.2 9 h4.4" stroke="#806010" stroke-width="1.2"/></svg>
<svg style="left:280.2px;top:29.2px" width="9.6" height="9.8" viewBox="0 0 10 11"><path d="M1.4 2.4 h2 M1.4 5.4 h2 M1.4 8.4 h2" stroke="#1a8a4a" stroke-width="1.6"/><path d="M4.4 2.4 h4.6 M4.4 5.4 h4.6 M4.4 8.4 h4.6" stroke="#222" stroke-width="1.1"/><path d="M2.4 1 V9.6" stroke="#444" stroke-width="0.6"/></svg>
<svg style="left:294.6px;top:32px" width="4.4" height="4.4" viewBox="0 0 10 10"><defs><radialGradient id="q1" cx="0.36" cy="0.3" r="0.75"><stop offset="0" stop-color="#c4d0ff"/><stop offset="0.35" stop-color="#2a44dc"/><stop offset="1" stop-color="#080c58"/></radialGradient></defs><circle cx="5" cy="5" r="5" fill="url(#q1)"/></svg>
<svg style="left:304.2px;top:30.2px" width="7.6" height="7.6" viewBox="0 0 10 10"><defs><radialGradient id="q2" cx="0.36" cy="0.3" r="0.75"><stop offset="0" stop-color="#c4d0ff"/><stop offset="0.35" stop-color="#2a44dc"/><stop offset="1" stop-color="#080c58"/></radialGradient></defs><circle cx="5" cy="5" r="5" fill="url(#q2)"/></svg>
<div style="left:320.2px;top:29.6px;width:1px;height:9.4px;background:#b0b0b0;"></div>
<div style="left:321.2px;top:29.6px;width:1px;height:9.4px;background:#dadada;"></div>
<svg style="left:326.6px;top:29.4px" width="9" height="9.6" viewBox="0 0 10 11"><rect x="1" y="1.6" width="3.4" height="3.4" fill="#aaa"/><path d="M5.4 4 C7.4 4 7 7 5.4 8.4 M3 7 L5.4 9.4" stroke="#a4a4a4" stroke-width="0.9" fill="none"/></svg>
<svg style="left:337.6px;top:29.8px" width="8.4" height="8.6" viewBox="0 0 9 10"><path d="M1.4 1.6 L7.6 8.4 M7.6 1.6 L1.4 8.4" stroke="#a2a2a2" stroke-width="1.1"/></svg>
<svg style="left:350px;top:29.2px" width="7.4" height="9.6" viewBox="0 0 9 11"><rect x="1" y="1" width="6.6" height="8.6" fill="#d8d8d8" stroke="#aaa" stroke-width="0.8"/><path d="M3 6 L4.4 3.4 L5.8 6 M4.4 4 V8" stroke="#999" stroke-width="0.8" fill="none"/></svg>
<div style="left:267.8px;top:42px;width:133.8px;height:356.4px;background:#e2e2e2;box-shadow:inset 2.2px 1.5px 0 #5c5c5c, inset 3.2px 0 0 #f2f2f2;"></div>
<div style="left:392.4px;top:43.4px;width:9px;height:355px;background:#c4c4c4;"></div>
<div style="left:392.6px;top:43.6px;width:8.6px;height:8.6px;background:#ececec;box-shadow:inset 1px 1px 0 #f2f2f2,inset -1px -1px 0 #8a8a8a;"></div>
<svg style="left:392.6px;top:43.6px" width="8.6" height="8.6" viewBox="0 0 8 8"><path d="M2 5 L4 2.8 L6 5Z" fill="#111"/></svg>
<div style="left:392.6px;top:52.4px;width:8.6px;height:7px;background:#e0e0e0;box-shadow:inset 1px 1px 0 #f2f2f2,inset -1px -1px 0 #8a8a8a;"></div>
<div style="left:392.6px;top:389.4px;width:8.6px;height:8.6px;background:#ececec;box-shadow:inset 1px 1px 0 #f2f2f2,inset -1px -1px 0 #8a8a8a;"></div>
<svg style="left:392.6px;top:389.4px" width="8.6" height="8.6" viewBox="0 0 8 8"><path d="M2 3 L4 5.2 L6 3Z" fill="#111"/></svg>
<svg style="left:275.7px;top:44.9px" width="6.2" height="6.2" viewBox="0 0 10 10"><defs><radialGradient id="q3" cx="0.36" cy="0.3" r="0.75"><stop offset="0" stop-color="#c4d0ff"/><stop offset="0.35" stop-color="#2a44dc"/><stop offset="1" stop-color="#080c58"/></radialGradient></defs><circle cx="5" cy="5" r="5" fill="url(#q3)"/></svg>
<span class="t" style="left:283.8px;top:43.54px;font-size:7.6px;line-height:9.12px;color:#111;transform:scaleX(0.81);">Advanced Lighting Override</span>
<svg style="left:275.7px;top:54.07px" width="6.2" height="6.2" viewBox="0 0 10 10"><defs><radialGradient id="q4" cx="0.36" cy="0.3" r="0.75"><stop offset="0" stop-color="#c4d0ff"/><stop offset="0.35" stop-color="#2a44dc"/><stop offset="1" stop-color="#080c58"/></radialGradient></defs><circle cx="5" cy="5" r="5" fill="url(#q4)"/></svg>
<span class="t" style="left:283.8px;top:52.71px;font-size:7.6px;line-height:9.12px;color:#111;transform:scaleX(0.81);">Architectural</span>
<svg style="left:275.7px;top:63.24px" width="6.2" height="6.2" viewBox="0 0 10 10"><defs><radialGradient id="q5" cx="0.36" cy="0.3" r="0.75"><stop offset="0" stop-color="#c4d0ff"/><stop offset="0.35" stop-color="#2a44dc"/><stop offset="1" stop-color="#080c58"/></radialGradient></defs><circle cx="5" cy="5" r="5" fill="url(#q5)"/></svg>
<span class="t" style="left:283.8px;top:61.88px;font-size:7.6px;line-height:9.12px;color:#111;transform:scaleX(0.84);">Blend</span>
<svg style="left:275.7px;top:72.41px" width="6.2" height="6.2" viewBox="0 0 10 10"><defs><radialGradient id="q6" cx="0.36" cy="0.3" r="0.75"><stop offset="0" stop-color="#c4d0ff"/><stop offset="0.35" stop-color="#2a44dc"/><stop offset="1" stop-color="#080c58"/></radialGradient></defs><circle cx="5" cy="5" r="5" fill="url(#q6)"/></svg>
<span class="t" style="left:283.8px;top:71.05px;font-size:7.6px;line-height:9.12px;color:#111;transform:scaleX(0.78);">Composite</span>
<svg style="left:275.7px;top:81.58px" width="6.2" height="6.2" viewBox="0 0 10 10"><defs><radialGradient id="q7" cx="0.36" cy="0.3" r="0.75"><stop offset="0" stop-color="#c4d0ff"/><stop offset="0.35" stop-color="#2a44dc"/><stop offset="1" stop-color="#080c58"/></radialGradient></defs><circle cx="5" cy="5" r="5" fill="url(#q7)"/></svg>
<span class="t" style="left:283.8px;top:80.22px;font-size:7.6px;line-height:9.12px;color:#111;transform:scaleX(0.81);">Double Sided</span>
<svg style="left:275.7px;top:90.75px" width="6.2" height="6.2" viewBox="0 0 10 10"><defs><radialGradient id="q8" cx="0.36" cy="0.3" r="0.75"><stop offset="0" stop-color="#c4d0ff"/><stop offset="0.35" stop-color="#2a44dc"/><stop offset="1" stop-color="#080c58"/></radialGradient></defs><circle cx="5" cy="5" r="5" fill="url(#q8)"/></svg>
<span class="t" style="left:283.8px;top:89.39px;font-size:7.6px;line-height:9.12px;color:#111;transform:scaleX(0.81);">Ink 'n Paint</span>
<svg style="left:275.7px;top:99.92px" width="6.2" height="6.2" viewBox="0 0 10 10"><defs><radialGradient id="q9" cx="0.36" cy="0.3" r="0.75"><stop offset="0" stop-color="#c4d0ff"/><stop offset="0.35" stop-color="#2a44dc"/><stop offset="1" stop-color="#080c58"/></radialGradient></defs><circle cx="5" cy="5" r="5" fill="url(#q9)"/></svg>
<span class="t" style="left:283.8px;top:98.56px;font-size:7.6px;line-height:9.12px;color:#111;transform:scaleX(0.81);">Lightscape Mtl</span>
<svg style="left:275.7px;top:109.09px" width="6.2" height="6.2" viewBox="0 0 10 10"><defs><radialGradient id="q10" cx="0.36" cy="0.3" r="0.75"><stop offset="0" stop-color="#c4d0ff"/><stop offset="0.35" stop-color="#2a44dc"/><stop offset="1" stop-color="#080c58"/></radialGradient></defs><circle cx="5" cy="5" r="5" fill="url(#q10)"/></svg>
<span class="t" style="left:283.8px;top:107.73px;font-size:7.6px;line-height:9.12px;color:#111;transform:scaleX(0.84);">Matte/Shadow</span>
<div style="left:283px;top:117.36px;width:44.8px;height:8px;background:#f3d25e;"></div>
<svg style="left:275.7px;top:118.26px" width="6.2" height="6.2" viewBox="0 0 10 10"><defs><radialGradient id="q11" cx="0.36" cy="0.3" r="0.75"><stop offset="0" stop-color="#c4d0ff"/><stop offset="0.35" stop-color="#2a44dc"/><stop offset="1" stop-color="#080c58"/></radialGradient></defs><circle cx="5" cy="5" r="5" fill="url(#q11)"/></svg>
<span class="t" style="left:283.8px;top:116.9px;font-size:7.6px;line-height:9.12px;color:#111;transform:scaleX(0.79);">MaxwellMaterial</span>
<svg style="left:275.7px;top:127.43px" width="6.2" height="6.2" viewBox="0 0 10 10"><defs><radialGradient id="q12" cx="0.36" cy="0.3" r="0.75"><stop offset="0" stop-color="#c4d0ff"/><stop offset="0.35" stop-color="#2a44dc"/><stop offset="1" stop-color="#080c58"/></radialGradient></defs><circle cx="5" cy="5" r="5" fill="url(#q12)"/></svg>
<span class="t" style="left:283.8px;top:126.07px;font-size:7.6px;line-height:9.12px;color:#111;transform:scaleX(0.81);">Morpher</span>
<svg style="left:275.7px;top:136.6px" width="6.2" height="6.2" viewBox="0 0 10 10"><defs><radialGradient id="q13" cx="0.36" cy="0.3" r="0.75"><stop offset="0" stop-color="#c4d0ff"/><stop offset="0.35" stop-color="#2a44dc"/><stop offset="1" stop-color="#080c58"/></radialGradient></defs><circle cx="5" cy="5" r="5" fill="url(#q13)"/></svg>
<span class="t" style="left:283.8px;top:135.24px;font-size:7.6px;line-height:9.12px;color:#111;transform:scaleX(0.82);">Multi/Sub-Object</span>
<svg style="left:275.7px;top:145.77px" width="6.2" height="6.2" viewBox="0 0 10 10"><defs><radialGradient id="q14" cx="0.36" cy="0.3" r="0.75"><stop offset="0" stop-color="#c4d0ff"/><stop offset="0.35" stop-color="#2a44dc"/><stop offset="1" stop-color="#080c58"/></radialGradient></defs><circle cx="5" cy="5" r="5" fill="url(#q14)"/></svg>
<span class="t" style="left:283.8px;top:144.41px;font-size:7.6px;line-height:9.12px;color:#111;transform:scaleX(0.82);">Raytrace</span>
<svg style="left:275.7px;top:154.94px" width="6.2" height="6.2" viewBox="0 0 10 10"><defs><radialGradient id="q15" cx="0.36" cy="0.3" r="0.75"><stop offset="0" stop-color="#c4d0ff"/><stop offset="0.35" stop-color="#2a44dc"/><stop offset="1" stop-color="#080c58"/></radialGradient></defs><circle cx="5" cy="5" r="5" fill="url(#q15)"/></svg>
<span class="t" style="left:283.8px;top:153.58px;font-size:7.6px;line-height:9.12px;color:#111;transform:scaleX(0.78);">Shell Material</span>
<svg style="left:275.7px;top:164.11px" width="6.2" height="6.2" viewBox="0 0 10 10"><defs><radialGradient id="q16" cx="0.36" cy="0.3" r="0.75"><stop offset="0" stop-color="#c4d0ff"/><stop offset="0.35" stop-color="#2a44dc"/><stop offset="1" stop-color="#080c58"/></radialGradient></defs><circle cx="5" cy="5" r="5" fill="url(#q16)"/></svg>
<span class="t" style="left:283.8px;top:162.75px;font-size:7.6px;line-height:9.12px;color:#111;transform:scaleX(0.82);">Shellac</span>
<svg style="left:275.7px;top:173.28px" width="6.2" height="6.2" viewBox="0 0 10 10"><defs><radialGradient id="q17" cx="0.36" cy="0.3" r="0.75"><stop offset="0" stop-color="#c4d0ff"/><stop offset="0.35" stop-color="#2a44dc"/><stop offset="1" stop-color="#080c58"/></radialGradient></defs><circle cx="5" cy="5" r="5" fill="url(#q17)"/></svg>
<span class="t" style="left:283.8px;top:171.92px;font-size:7.6px;line-height:9.12px;color:#111;transform:scaleX(0.83);">Standard</span>
<svg style="left:275.7px;top:182.45px" width="6.2" height="6.2" viewBox="0 0 10 10"><defs><radialGradient id="q18" cx="0.36" cy="0.3" r="0.75"><stop offset="0" stop-color="#c4d0ff"/><stop offset="0.35" stop-color="#2a44dc"/><stop offset="1" stop-color="#080c58"/></radialGradient></defs><circle cx="5" cy="5" r="5" fill="url(#q18)"/></svg>
<span class="t" style="left:283.8px;top:181.09px;font-size:7.6px;line-height:9.12px;color:#111;transform:scaleX(0.86);">Top/Bottom</span>
<svg style="left:275.7px;top:191.62px" width="6.2" height="6.2" viewBox="0 0 10 10"><defs><radialGradient id="q19" cx="0.36" cy="0.3" r="0.75"><stop offset="0" stop-color="#c4d0ff"/><stop offset="0.35" stop-color="#2a44dc"/><stop offset="1" stop-color="#080c58"/></radialGradient></defs><circle cx="5" cy="5" r="5" fill="url(#q19)"/></svg>
<span class="t" style="left:283.1px;top:190.26px;font-size:7.6px;line-height:9.12px;color:#111;transform:scaleX(0.8);">VRayFastSSS</span>
<svg style="left:275.7px;top:200.79px" width="6.2" height="6.2" viewBox="0 0 10 10"><defs><radialGradient id="q20" cx="0.36" cy="0.3" r="0.75"><stop offset="0" stop-color="#c4d0ff"/><stop offset="0.35" stop-color="#2a44dc"/><stop offset="1" stop-color="#080c58"/></radialGradient></defs><circle cx="5" cy="5" r="5" fill="url(#q20)"/></svg>
<span class="t" style="left:283.1px;top:199.43px;font-size:7.6px;line-height:9.12px;color:#111;transform:scaleX(0.83);">VRayLightMtl</span>
<svg style="left:275.7px;top:209.96px" width="6.2" height="6.2" viewBox="0 0 10 10"><defs><radialGradient id="q21" cx="0.36" cy="0.3" r="0.75"><stop offset="0" stop-color="#c4d0ff"/><stop offset="0.35" stop-color="#2a44dc"/><stop offset="1" stop-color="#080c58"/></radialGradient></defs><circle cx="5" cy="5" r="5" fill="url(#q21)"/></svg>
<span class="t" style="left:283.1px;top:208.6px;font-size:7.6px;line-height:9.12px;color:#111;transform:scaleX(0.82);">XRef Material</span>
<div style="left:214px;top:87px;width:50.6px;height:62px;border:1px solid #9c9c9c;box-sizing:border-box;box-shadow:1px 1px 0 #e6e6e6, inset 1px 1px 0 #e6e6e6;"></div>
<div style="left:217.4px;top:83.6px;width:39px;height:7px;background:#c7c7c7;"></div>
<span class="t" style="left:219px;top:82.64px;font-size:7.6px;line-height:9.12px;color:#111;transform:scaleX(0.76);">Browse From:</span>
<div style="left:217.6px;top:92px;width:6.8px;height:6.8px;background:#ececec;border-radius:50%;box-shadow:inset 1px 1px 0 #777,inset -1px -1px 0 #fff;"></div>
<span class="t" style="left:228px;top:91.04px;font-size:7.6px;line-height:9.12px;color:#111;transform:scaleX(0.79);">Mtl Library</span>
<div style="left:217.6px;top:101.4px;width:6.8px;height:6.8px;background:#ececec;border-radius:50%;box-shadow:inset 1px 1px 0 #777,inset -1px -1px 0 #fff;"></div>
<span class="t" style="left:228px;top:100.44px;font-size:7.6px;line-height:9.12px;color:#111;transform:scaleX(0.8);">Mtl Editor</span>
<div style="left:217.6px;top:110.8px;width:6.8px;height:6.8px;background:#d8d8d8;border-radius:50%;box-shadow:inset 1px 1px 0 #777,inset -1px -1px 0 #fff;"></div>
<span class="t" style="left:228px;top:109.84px;font-size:7.6px;line-height:9.12px;color:#a6a6a6;transform:scaleX(0.8);">Active Slot</span>
<div style="left:217.6px;top:120.2px;width:6.8px;height:6.8px;background:#ececec;border-radius:50%;box-shadow:inset 1px 1px 0 #777,inset -1px -1px 0 #fff;"></div>
<span class="t" style="left:228px;top:119.24px;font-size:7.6px;line-height:9.12px;color:#111;transform:scaleX(0.81);">Selected</span>
<div style="left:217.6px;top:129.6px;width:6.8px;height:6.8px;background:#ececec;border-radius:50%;box-shadow:inset 1px 1px 0 #777,inset -1px -1px 0 #fff;"></div>
<span class="t" style="left:228px;top:128.64px;font-size:7.6px;line-height:9.12px;color:#111;transform:scaleX(0.82);">Scene</span>
<div style="left:217.6px;top:139px;width:6.8px;height:6.8px;background:#ececec;border-radius:50%;box-shadow:inset 1px 1px 0 #777,inset -1px -1px 0 #fff;"></div>
<div style="left:219.8px;top:141.2px;width:2.4px;height:2.4px;background:#111;border-radius:50%;"></div>
<span class="t" style="left:228px;top:138.04px;font-size:7.6px;line-height:9.12px;color:#111;transform:scaleX(0.79);">New</span>
<div style="left:214px;top:154.6px;width:50.6px;height:32.6px;border:1px solid #9c9c9c;box-sizing:border-box;box-shadow:1px 1px 0 #e6e6e6, inset 1px 1px 0 #e6e6e6;"></div>
<div style="left:217.4px;top:151.4px;width:18.6px;height:7px;background:#c7c7c7;"></div>
<span class="t" style="left:219px;top:150.24px;font-size:7.6px;line-height:9.12px;color:#111;transform:scaleX(0.82);">Show</span>
<div style="left:218.6px;top:160.4px;width:6.6px;height:6.6px;background:#d2d2d2;box-shadow:inset 1px 1px 0 #666,inset -1px -1px 0 #fafafa;"></div>
<svg style="left:218.6px;top:160.4px" width="6.6" height="6.6" viewBox="0 0 7 7"><path d="M1.4 3.4 L2.9 5 L5.7 1.6" fill="none" stroke="#888" stroke-width="1.2"/></svg>
<span class="t" style="left:228.4px;top:159.34px;font-size:7.6px;line-height:9.12px;color:#a6a6a6;transform:scaleX(0.82);">Materials</span>
<div style="left:218.6px;top:169.6px;width:6.6px;height:6.6px;background:#d2d2d2;box-shadow:inset 1px 1px 0 #666,inset -1px -1px 0 #fafafa;"></div>
<span class="t" style="left:228.4px;top:168.54px;font-size:7.6px;line-height:9.12px;color:#a6a6a6;transform:scaleX(0.75);">Maps</span>
<div style="left:218.6px;top:178.8px;width:6.6px;height:6.6px;background:#e6e6e6;box-shadow:inset 1px 1px 0 #666,inset -1px -1px 0 #fafafa;"></div>
<span class="t" style="left:228.4px;top:177.74px;font-size:7.6px;line-height:9.12px;color:#111;transform:scaleX(0.81);">Incompatible</span>
<div style="left:214px;top:189.4px;width:50.6px;height:24.2px;border:1px solid #9c9c9c;box-sizing:border-box;box-shadow:1px 1px 0 #e6e6e6, inset 1px 1px 0 #e6e6e6;"></div>
<div style="left:218.6px;top:193.3px;width:6.6px;height:6.6px;background:#d2d2d2;box-shadow:inset 1px 1px 0 #666,inset -1px -1px 0 #fafafa;"></div>
<svg style="left:218.6px;top:193.3px" width="6.6" height="6.6" viewBox="0 0 7 7"><path d="M1.4 3.4 L2.9 5 L5.7 1.6" fill="none" stroke="#888" stroke-width="1.2"/></svg>
<span class="t" style="left:228.4px;top:192.24px;font-size:7.6px;line-height:9.12px;color:#a6a6a6;transform:scaleX(0.8);">Root Only</span>
<div style="left:218.6px;top:202.4px;width:6.6px;height:6.6px;background:#d2d2d2;box-shadow:inset 1px 1px 0 #666,inset -1px -1px 0 #fafafa;"></div>
<span class="t" style="left:228.4px;top:201.34px;font-size:7.6px;line-height:9.12px;color:#a6a6a6;transform:scaleX(0.79);">By Object</span>
<div style="left:246px;top:400px;width:43.4px;height:10.6px;background:#d2d2d2;box-shadow:inset 1px 1px 0 #f2f2f2,inset -1px -1px 0 #8a8a8a;"></div>
<span class="t" style="left:263.3px;top:400.84px;font-size:7.6px;line-height:9.12px;color:#111;transform:scaleX(0.78);">OK</span>
<div style="left:319px;top:400px;width:41.4px;height:10.6px;background:#d2d2d2;box-shadow:inset 1px 1px 0 #f2f2f2,inset -1px -1px 0 #8a8a8a;"></div>
<span class="t" style="left:330.1px;top:400.84px;font-size:7.6px;line-height:9.12px;color:#111;transform:scaleX(0.8);">Cancel</span>
<div style="left:408px;top:0px;width:210px;height:414px;background:#d6d6da;"></div>
<div style="left:413px;top:15px;width:202px;height:399px;background:#c7c7c7;"></div>
<div style="left:409px;top:0px;width:209px;height:15px;background:linear-gradient(#bcbcd6 0%,#d0d0e4 25%,#e6e6f0 65%,#f4f4fa 100%);"></div>
<div style="left:412.3px;top:2.6px;width:9px;height:9px;background:linear-gradient(135deg,#7fd0c8,#1c6a68 70%,#0c3c3c);border-radius:1.5px;"></div>
<svg style="left:412.5px;top:3px" width="8.5" height="9" viewBox="0 0 9 9"><path d="M2.2 4.3 L4.5 2 L4.5 3.4 C6.6 3.4 7 4.6 7 6.6 L2.6 6.6" fill="none" stroke="#e8ffff" stroke-width="1.1"/></svg>
<span class="t" style="left:423.8px;top:3.12px;font-size:7.8px;line-height:9.36px;color:#1c1c24;font-weight:bold;transform:scaleX(0.97);text-shadow:0 0 0.5px #1c1c24;">Material Editor - 01 - Default</span>
<div style="left:577px;top:2px;width:11.6px;height:11.6px;background:linear-gradient(#fbfbfd,#d0d0dc);border-radius:2px;box-shadow:inset 0 0 0 1px #9a9aa8;"></div>
<div style="left:579.6px;top:9.6px;width:5px;height:1.6px;background:#2a2a44;"></div>
<div style="left:590px;top:2px;width:11.6px;height:11.6px;background:linear-gradient(#fbfbfd,#d0d0dc);border-radius:2px;box-shadow:inset 0 0 0 1px #9a9aa8;"></div>
<div style="left:592.6px;top:4.6px;width:6.4px;height:6.4px;border:1px solid #b4b4c8;border-top-width:2px;box-sizing:border-box;"></div>
<div style="left:603.3px;top:2px;width:11.6px;height:11.6px;background:linear-gradient(#e88080,#cc3838);border-radius:2px;box-shadow:inset 0 0 0 1px #9a9aa8;"></div>
<svg style="left:603.3px;top:2px" width="11.6" height="11.6" viewBox="0 0 12 12"><path d="M3.2 3.2 L8.8 8.8 M8.8 3.2 L3.2 8.8" stroke="#fff" stroke-width="1.7" fill="none"/></svg>
<div style="left:409px;top:15px;width:208px;height:12.8px;background:#e6e6ee;"></div>
<span class="t" style="left:413.6px;top:15.86px;font-size:7.4px;line-height:8.88px;color:#15151c;transform:scaleX(0.85);">Material</span>
<span class="t" style="left:442px;top:15.86px;font-size:7.4px;line-height:8.88px;color:#7c7c8c;transform:scaleX(0.86);">Navigation</span>
<span class="t" style="left:479px;top:15.86px;font-size:7.4px;line-height:8.88px;color:#7c7c8c;transform:scaleX(0.82);">Options</span>
<span class="t" style="left:506px;top:15.86px;font-size:7.4px;line-height:8.88px;color:#7c7c8c;transform:scaleX(0.88);">Utilities</span>
<div style="left:413px;top:28px;width:177px;height:116.6px;background:#050505;"></div>
<div style="left:414.2px;top:28.7px;width:29px;height:29px;background:#fff;"></div>
<svg style="left:415.2px;top:29.7px" width="27" height="27" viewBox="0 0 27 27"><defs><pattern id="ck" width="6" height="6" patternUnits="userSpaceOnUse"><rect width="6" height="6" fill="#101010"/><rect width="3" height="3" fill="#9a9a9a"/><rect x="3" y="3" width="3" height="3" fill="#9a9a9a"/></pattern></defs><rect width="27" height="27" fill="url(#ck)"/><circle cx="13.5" cy="13.5" r="12.2" fill="#fff"/></svg>
<div style="left:444.3px;top:29.3px;width:27.6px;height:27px;border:1px solid #7c7c7c;box-sizing:border-box;border-radius:1.5px;"></div>
<span class="t" style="left:452.9px;top:35.26px;font-size:5.9px;line-height:7.08px;color:#f6f6f6;font-weight:bold;transform:scaleX(0.99);text-shadow:0 0 0.5px #fff,0 0 0.5px #fff;">NO</span>
<span class="t" style="left:445.9px;top:43.46px;font-size:5.9px;line-height:7.08px;color:#f6f6f6;font-weight:bold;transform:scaleX(0.93);text-shadow:0 0 0.5px #fff,0 0 0.5px #fff;">PREVIEW</span>
<div style="left:473.6px;top:29.3px;width:27.6px;height:27px;border:1px solid #7c7c7c;box-sizing:border-box;border-radius:1.5px;"></div>
<span class="t" style="left:482.2px;top:35.26px;font-size:5.9px;line-height:7.08px;color:#f6f6f6;font-weight:bold;transform:scaleX(0.99);text-shadow:0 0 0.5px #fff,0 0 0.5px #fff;">NO</span>
<span class="t" style="left:475.2px;top:43.46px;font-size:5.9px;line-height:7.08px;color:#f6f6f6;font-weight:bold;transform:scaleX(0.93);text-shadow:0 0 0.5px #fff,0 0 0.5px #fff;">PREVIEW</span>
<div style="left:502.9px;top:29.3px;width:27.6px;height:27px;border:1px solid #7c7c7c;box-sizing:border-box;border-radius:1.5px;"></div>
<span class="t" style="left:511.5px;top:35.26px;font-size:5.9px;line-height:7.08px;color:#f6f6f6;font-weight:bold;transform:scaleX(0.99);text-shadow:0 0 0.5px #fff,0 0 0.5px #fff;">NO</span>
<span class="t" style="left:504.5px;top:43.46px;font-size:5.9px;line-height:7.08px;color:#f6f6f6;font-weight:bold;transform:scaleX(0.93);text-shadow:0 0 0.5px #fff,0 0 0.5px #fff;">PREVIEW</span>
<div style="left:532.2px;top:29.3px;width:27.6px;height:27px;border:1px solid #7c7c7c;box-sizing:border-box;border-radius:1.5px;"></div>
<span class="t" style="left:540.8px;top:35.26px;font-size:5.9px;line-height:7.08px;color:#f6f6f6;font-weight:bold;transform:scaleX(0.99);text-shadow:0 0 0.5px #fff,0 0 0.5px #fff;">NO</span>
<span class="t" style="left:533.8px;top:43.46px;font-size:5.9px;line-height:7.08px;color:#f6f6f6;font-weight:bold;transform:scaleX(0.93);text-shadow:0 0 0.5px #fff,0 0 0.5px #fff;">PREVIEW</span>
<div style="left:561.5px;top:29.3px;width:27.6px;height:27px;border:1px solid #7c7c7c;box-sizing:border-box;border-radius:1.5px;"></div>
<span class="t" style="left:570.1px;top:35.26px;font-size:5.9px;line-height:7.08px;color:#f6f6f6;font-weight:bold;transform:scaleX(0.99);text-shadow:0 0 0.5px #fff,0 0 0.5px #fff;">NO</span>
<span class="t" style="left:563.1px;top:43.46px;font-size:5.9px;line-height:7.08px;color:#f6f6f6;font-weight:bold;transform:scaleX(0.93);text-shadow:0 0 0.5px #fff,0 0 0.5px #fff;">PREVIEW</span>
<div style="left:415px;top:58.1px;width:27.6px;height:27px;border:1px solid #7c7c7c;box-sizing:border-box;border-radius:1.5px;"></div>
<span class="t" style="left:423.6px;top:64.06px;font-size:5.9px;line-height:7.08px;color:#f6f6f6;font-weight:bold;transform:scaleX(0.99);text-shadow:0 0 0.5px #fff,0 0 0.5px #fff;">NO</span>
<span class="t" style="left:416.6px;top:72.26px;font-size:5.9px;line-height:7.08px;color:#f6f6f6;font-weight:bold;transform:scaleX(0.93);text-shadow:0 0 0.5px #fff,0 0 0.5px #fff;">PREVIEW</span>
<div style="left:444.3px;top:58.1px;width:27.6px;height:27px;border:1px solid #7c7c7c;box-sizing:border-box;border-radius:1.5px;"></div>
<span class="t" style="left:452.9px;top:64.06px;font-size:5.9px;line-height:7.08px;color:#f6f6f6;font-weight:bold;transform:scaleX(0.99);text-shadow:0 0 0.5px #fff,0 0 0.5px #fff;">NO</span>
<span class="t" style="left:445.9px;top:72.26px;font-size:5.9px;line-height:7.08px;color:#f6f6f6;font-weight:bold;transform:scaleX(0.93);text-shadow:0 0 0.5px #fff,0 0 0.5px #fff;">PREVIEW</span>
<div style="left:473.6px;top:58.1px;width:27.6px;height:27px;border:1px solid #7c7c7c;box-sizing:border-box;border-radius:1.5px;"></div>
<span class="t" style="left:482.2px;top:64.06px;font-size:5.9px;line-height:7.08px;color:#f6f6f6;font-weight:bold;transform:scaleX(0.99);text-shadow:0 0 0.5px #fff,0 0 0.5px #fff;">NO</span>
<span class="t" style="left:475.2px;top:72.26px;font-size:5.9px;line-height:7.08px;color:#f6f6f6;font-weight:bold;transform:scaleX(0.93);text-shadow:0 0 0.5px #fff,0 0 0.5px #fff;">PREVIEW</span>
<div style="left:502.9px;top:58.1px;width:27.6px;height:27px;border:1px solid #7c7c7c;box-sizing:border-box;border-radius:1.5px;"></div>
<span class="t" style="left:511.5px;top:64.06px;font-size:5.9px;line-height:7.08px;color:#f6f6f6;font-weight:bold;transform:scaleX(0.99);text-shadow:0 0 0.5px #fff,0 0 0.5px #fff;">NO</span>
<span class="t" style="left:504.5px;top:72.26px;font-size:5.9px;line-height:7.08px;color:#f6f6f6;font-weight:bold;transform:scaleX(0.93);text-shadow:0 0 0.5px #fff,0 0 0.5px #fff;">PREVIEW</span>
<div style="left:532.2px;top:58.1px;width:27.6px;height:27px;border:1px solid #7c7c7c;box-sizing:border-box;border-radius:1.5px;"></div>
<span class="t" style="left:540.8px;top:64.06px;font-size:5.9px;line-height:7.08px;color:#f6f6f6;font-weight:bold;transform:scaleX(0.99);text-shadow:0 0 0.5px #fff,0 0 0.5px #fff;">NO</span>
<span class="t" style="left:533.8px;top:72.26px;font-size:5.9px;line-height:7.08px;color:#f6f6f6;font-weight:bold;transform:scaleX(0.93);text-shadow:0 0 0.5px #fff,0 0 0.5px #fff;">PREVIEW</span>
<div style="left:561.5px;top:58.1px;width:27.6px;height:27px;border:1px solid #7c7c7c;box-sizing:border-box;border-radius:1.5px;"></div>
<span class="t" style="left:570.1px;top:64.06px;font-size:5.9px;line-height:7.08px;color:#f6f6f6;font-weight:bold;transform:scaleX(0.99);text-shadow:0 0 0.5px #fff,0 0 0.5px #fff;">NO</span>
<span class="t" style="left:563.1px;top:72.26px;font-size:5.9px;line-height:7.08px;color:#f6f6f6;font-weight:bold;transform:scaleX(0.93);text-shadow:0 0 0.5px #fff,0 0 0.5px #fff;">PREVIEW</span>
<div style="left:415px;top:86.9px;width:27.6px;height:27px;border:1px solid #7c7c7c;box-sizing:border-box;border-radius:1.5px;"></div>
<span class="t" style="left:423.6px;top:92.86px;font-size:5.9px;line-height:7.08px;color:#f6f6f6;font-weight:bold;transform:scaleX(0.99);text-shadow:0 0 0.5px #fff,0 0 0.5px #fff;">NO</span>
<span class="t" style="left:416.6px;top:101.06px;font-size:5.9px;line-height:7.08px;color:#f6f6f6;font-weight:bold;transform:scaleX(0.93);text-shadow:0 0 0.5px #fff,0 0 0.5px #fff;">PREVIEW</span>
<div style="left:444.3px;top:86.9px;width:27.6px;height:27px;border:1px solid #7c7c7c;box-sizing:border-box;border-radius:1.5px;"></div>
<span class="t" style="left:452.9px;top:92.86px;font-size:5.9px;line-height:7.08px;color:#f6f6f6;font-weight:bold;transform:scaleX(0.99);text-shadow:0 0 0.5px #fff,0 0 0.5px #fff;">NO</span>
<span class="t" style="left:445.9px;top:101.06px;font-size:5.9px;line-height:7.08px;color:#f6f6f6;font-weight:bold;transform:scaleX(0.93);text-shadow:0 0 0.5px #fff,0 0 0.5px #fff;">PREVIEW</span>
<div style="left:473.6px;top:86.9px;width:27.6px;height:27px;border:1px solid #7c7c7c;box-sizing:border-box;border-radius:1.5px;"></div>
<span class="t" style="left:482.2px;top:92.86px;font-size:5.9px;line-height:7.08px;color:#f6f6f6;font-weight:bold;transform:scaleX(0.99);text-shadow:0 0 0.5px #fff,0 0 0.5px #fff;">NO</span>
<span class="t" style="left:475.2px;top:101.06px;font-size:5.9px;line-height:7.08px;color:#f6f6f6;font-weight:bold;transform:scaleX(0.93);text-shadow:0 0 0.5px #fff,0 0 0.5px #fff;">PREVIEW</span>
<div style="left:502.9px;top:86.9px;width:27.6px;height:27px;border:1px solid #7c7c7c;box-sizing:border-box;border-radius:1.5px;"></div>
<span class="t" style="left:511.5px;top:92.86px;font-size:5.9px;line-height:7.08px;color:#f6f6f6;font-weight:bold;transform:scaleX(0.99);text-shadow:0 0 0.5px #fff,0 0 0.5px #fff;">NO</span>
<span class="t" style="left:504.5px;top:101.06px;font-size:5.9px;line-height:7.08px;color:#f6f6f6;font-weight:bold;transform:scaleX(0.93);text-shadow:0 0 0.5px #fff,0 0 0.5px #fff;">PREVIEW</span>
<div style="left:532.2px;top:86.9px;width:27.6px;height:27px;border:1px solid #7c7c7c;box-sizing:border-box;border-radius:1.5px;"></div>
<span class="t" style="left:540.8px;top:92.86px;font-size:5.9px;line-height:7.08px;color:#f6f6f6;font-weight:bold;transform:scaleX(0.99);text-shadow:0 0 0.5px #fff,0 0 0.5px #fff;">NO</span>
<span class="t" style="left:533.8px;top:101.06px;font-size:5.9px;line-height:7.08px;color:#f6f6f6;font-weight:bold;transform:scaleX(0.93);text-shadow:0 0 0.5px #fff,0 0 0.5px #fff;">PREVIEW</span>
<div style="left:561.5px;top:86.9px;width:27.6px;height:27px;border:1px solid #7c7c7c;box-sizing:border-box;border-radius:1.5px;"></div>
<span class="t" style="left:570.1px;top:92.86px;font-size:5.9px;line-height:7.08px;color:#f6f6f6;font-weight:bold;transform:scaleX(0.99);text-shadow:0 0 0.5px #fff,0 0 0.5px #fff;">NO</span>
<span class="t" style="left:563.1px;top:101.06px;font-size:5.9px;line-height:7.08px;color:#f6f6f6;font-weight:bold;transform:scaleX(0.93);text-shadow:0 0 0.5px #fff,0 0 0.5px #fff;">PREVIEW</span>
<div style="left:415px;top:115.7px;width:27.6px;height:27px;border:1px solid #7c7c7c;box-sizing:border-box;border-radius:1.5px;"></div>
<span class="t" style="left:423.6px;top:121.66px;font-size:5.9px;line-height:7.08px;color:#f6f6f6;font-weight:bold;transform:scaleX(0.99);text-shadow:0 0 0.5px #fff,0 0 0.5px #fff;">NO</span>
<span class="t" style="left:416.6px;top:129.86px;font-size:5.9px;line-height:7.08px;color:#f6f6f6;font-weight:bold;transform:scaleX(0.93);text-shadow:0 0 0.5px #fff,0 0 0.5px #fff;">PREVIEW</span>
<div style="left:444.3px;top:115.7px;width:27.6px;height:27px;border:1px solid #7c7c7c;box-sizing:border-box;border-radius:1.5px;"></div>
<span class="t" style="left:452.9px;top:121.66px;font-size:5.9px;line-height:7.08px;color:#f6f6f6;font-weight:bold;transform:scaleX(0.99);text-shadow:0 0 0.5px #fff,0 0 0.5px #fff;">NO</span>
<span class="t" style="left:445.9px;top:129.86px;font-size:5.9px;line-height:7.08px;color:#f6f6f6;font-weight:bold;transform:scaleX(0.93);text-shadow:0 0 0.5px #fff,0 0 0.5px #fff;">PREVIEW</span>
<div style="left:473.6px;top:115.7px;width:27.6px;height:27px;border:1px solid #7c7c7c;box-sizing:border-box;border-radius:1.5px;"></div>
<span class="t" style="left:482.2px;top:121.66px;font-size:5.9px;line-height:7.08px;color:#f6f6f6;font-weight:bold;transform:scaleX(0.99);text-shadow:0 0 0.5px #fff,0 0 0.5px #fff;">NO</span>
<span class="t" style="left:475.2px;top:129.86px;font-size:5.9px;line-height:7.08px;color:#f6f6f6;font-weight:bold;transform:scaleX(0.93);text-shadow:0 0 0.5px #fff,0 0 0.5px #fff;">PREVIEW</span>
<div style="left:502.9px;top:115.7px;width:27.6px;height:27px;border:1px solid #7c7c7c;box-sizing:border-box;border-radius:1.5px;"></div>
<span class="t" style="left:511.5px;top:121.66px;font-size:5.9px;line-height:7.08px;color:#f6f6f6;font-weight:bold;transform:scaleX(0.99);text-shadow:0 0 0.5px #fff,0 0 0.5px #fff;">NO</span>
<span class="t" style="left:504.5px;top:129.86px;font-size:5.9px;line-height:7.08px;color:#f6f6f6;font-weight:bold;transform:scaleX(0.93);text-shadow:0 0 0.5px #fff,0 0 0.5px #fff;">PREVIEW</span>
<div style="left:532.2px;top:115.7px;width:27.6px;height:27px;border:1px solid #7c7c7c;box-sizing:border-box;border-radius:1.5px;"></div>
<span class="t" style="left:540.8px;top:121.66px;font-size:5.9px;line-height:7.08px;color:#f6f6f6;font-weight:bold;transform:scaleX(0.99);text-shadow:0 0 0.5px #fff,0 0 0.5px #fff;">NO</span>
<span class="t" style="left:533.8px;top:129.86px;font-size:5.9px;line-height:7.08px;color:#f6f6f6;font-weight:bold;transform:scaleX(0.93);text-shadow:0 0 0.5px #fff,0 0 0.5px #fff;">PREVIEW</span>
<div style="left:561.5px;top:115.7px;width:27.6px;height:27px;border:1px solid #7c7c7c;box-sizing:border-box;border-radius:1.5px;"></div>
<span class="t" style="left:570.1px;top:121.66px;font-size:5.9px;line-height:7.08px;color:#f6f6f6;font-weight:bold;transform:scaleX(0.99);text-shadow:0 0 0.5px #fff,0 0 0.5px #fff;">NO</span>
<span class="t" style="left:563.1px;top:129.86px;font-size:5.9px;line-height:7.08px;color:#f6f6f6;font-weight:bold;transform:scaleX(0.93);text-shadow:0 0 0.5px #fff,0 0 0.5px #fff;">PREVIEW</span>
<div style="left:413px;top:144.6px;width:203px;height:13px;background:#c7c7c7;"></div>
<div style="left:590.6px;top:28px;width:9px;height:116.6px;background:#cecece;"></div>
<div style="left:591px;top:29px;width:8.4px;height:8.4px;background:#ececec;box-shadow:inset 1px 1px 0 #f2f2f2,inset -1px -1px 0 #8a8a8a;"></div>
<div style="left:591px;top:136px;width:8.4px;height:8.4px;background:#ececec;box-shadow:inset 1px 1px 0 #f2f2f2,inset -1px -1px 0 #8a8a8a;"></div>
<svg style="left:591px;top:29px" width="8.4" height="8.4" viewBox="0 0 8 8"><path d="M2.2 5 L4 3 L5.8 5Z" fill="#888"/></svg>
<svg style="left:591px;top:136px" width="8.4" height="8.4" viewBox="0 0 8 8"><path d="M2.2 3 L4 5 L5.8 3Z" fill="#888"/></svg>
<div style="left:413px;top:145px;width:177px;height:8.6px;background:#cdcdcd;"></div>
<div style="left:414px;top:145.2px;width:8.4px;height:8.2px;background:#ececec;box-shadow:inset 1px 1px 0 #f2f2f2,inset -1px -1px 0 #8a8a8a;"></div>
<div style="left:581px;top:145.2px;width:8.4px;height:8.2px;background:#ececec;box-shadow:inset 1px 1px 0 #f2f2f2,inset -1px -1px 0 #8a8a8a;"></div>
<svg style="left:414px;top:145.2px" width="8.4" height="8.2" viewBox="0 0 8 8"><path d="M5 2.2 L3 4 L5 5.8Z" fill="#888"/></svg>
<svg style="left:581px;top:145.2px" width="8.4" height="8.2" viewBox="0 0 8 8"><path d="M3 2.2 L5 4 L3 5.8Z" fill="#888"/></svg>
<svg style="left:601.5px;top:29.5px" width="14" height="14" viewBox="0 0 14 14"><defs><radialGradient id="sg410" cx="0.38" cy="0.32" r="0.7"><stop offset="0" stop-color="#e8e8e8"/><stop offset="0.45" stop-color="#6a6a6a"/><stop offset="1" stop-color="#161616"/></radialGradient></defs><circle cx="6" cy="5.2" r="4.6" fill="url(#sg410)"/><path d="M10.4 11 L11.8 11 L11.8 9.6Z" fill="#222"/></svg>
<div style="left:601.8px;top:43.2px;width:12.4px;height:12.4px;background:#eadf64;box-shadow:inset 0 0 0 1px #d4c440;border-radius:1px;"></div>
<svg style="left:601.8px;top:43px" width="13" height="13" viewBox="0 0 13 13"><defs><radialGradient id="sh410" cx="0.45" cy="0.4" r="0.65"><stop offset="0" stop-color="#c8a890"/><stop offset="0.5" stop-color="#5a5050"/><stop offset="1" stop-color="#141414"/></radialGradient></defs><circle cx="6.2" cy="6.2" r="4" fill="url(#sh410)"/></svg>
<svg style="left:603.3px;top:58.2px" width="9.6" height="9.6" viewBox="0 0 12 12"><defs><pattern id="cb410" width="4" height="4" patternUnits="userSpaceOnUse"><rect width="4" height="4" fill="#f4f4f4"/><rect width="2" height="2" fill="#111"/><rect x="2" y="2" width="2" height="2" fill="#111"/></pattern></defs><rect width="12" height="12" fill="url(#cb410)"/></svg>
<div style="left:603.5px;top:74px;width:9.6px;height:7.6px;background:linear-gradient(#5e5e5e,#8e8e8e);box-shadow:inset 0 0 0 0.6px #4a4a4a;"></div>
<div style="left:613.1px;top:82.4px;width:1.4px;height:1.4px;background:#333;"></div>
<svg style="left:603.5px;top:87.4px" width="9.6" height="8.6" viewBox="0 0 12 11"><rect width="12" height="11" fill="#333"/><rect x="0.5" y="0.5" width="2" height="10" fill="#e8e8d0"/><rect x="2.5" y="0.5" width="2" height="10" fill="#d8e070"/><rect x="4.5" y="0.5" width="2" height="10" fill="#70d890"/><rect x="6.5" y="0.5" width="2.5" height="10" fill="#8830a0"/><rect x="9" y="0.5" width="2.5" height="10" fill="#5a2078"/></svg>
<svg style="left:602.5px;top:100px" width="12" height="12" viewBox="0 0 14 14"><path d="M1.6 2.4 L5 0.8 L11 10.6 L7.6 12.4Z" fill="#e8e8e8" stroke="#181818" stroke-width="1.3"/><path d="M3.6 3.4 L5 2.8 M5.2 6 L6.6 5.4 M6.8 8.6 L8.2 8" stroke="#181818" stroke-width="1"/><path d="M11.6 13.2 L13 13.2 L13 11.8Z" fill="#222"/></svg>
<svg style="left:603.3px;top:115.4px" width="10.6" height="9.8" viewBox="0 0 13 12"><rect x="1" y="1" width="8" height="7" fill="#eef" stroke="#223" stroke-width="1"/><rect x="1" y="1" width="8" height="2" fill="#2840b0"/><circle cx="8.6" cy="8" r="3" fill="#444" stroke="#111" stroke-width="0.8"/><circle cx="7.8" cy="7.2" r="1" fill="#ccc"/></svg>
<svg style="left:603.3px;top:128.4px" width="10.4" height="9.6" viewBox="0 0 13 12"><path d="M1.5 1.5 h3 v3 h-3z M6 2 h3 v2.4 h-3z M2 6.6 h3 v3 h-3z" fill="#b8b8b8" stroke="#666" stroke-width="0.7"/><path d="M7 6 L10.6 10.6 M10.6 6.6 L8 9.6" stroke="#a04848" stroke-width="0.9"/></svg>
<svg style="left:602px;top:139.5px" width="12" height="13" viewBox="0 0 12 13"><path d="M3.4 1.5 V11 M3.4 3.6 H7 M3.4 8.6 H7" stroke="#555" stroke-width="0.9" fill="none"/><circle cx="8" cy="3.8" r="2.3" fill="#2036c0"/><circle cx="8" cy="8.8" r="2.3" fill="#2036c0"/><circle cx="7.3" cy="3.1" r="0.8" fill="#a8b4ff"/><circle cx="7.3" cy="8.1" r="0.8" fill="#a8b4ff"/></svg>
<div style="left:416px;top:160.6px;width:1px;height:10px;background:#aeaeae;"></div>
<div style="left:417px;top:160.6px;width:1px;height:10px;background:#dcdcdc;"></div>
<svg style="left:415.5px;top:158.5px" width="13" height="14" viewBox="0 0 13 14"><defs><radialGradient id="bs410" cx="0.4" cy="0.35" r="0.7"><stop offset="0" stop-color="#b8c8ff"/><stop offset="0.4" stop-color="#2440d8"/><stop offset="1" stop-color="#0a1260"/></radialGradient></defs><circle cx="7.4" cy="7.8" r="3.6" fill="url(#bs410)"/><path d="M1.4 1.8 L4.8 4.8 M5 2.6 L5 5 L2.6 5" stroke="#111" stroke-width="1.2" fill="none"/></svg>
<svg style="left:429.5px;top:159px" width="13" height="13" viewBox="0 0 13 13"><circle cx="4.6" cy="4.4" r="3" fill="#a4a4a4"/><rect x="4.6" y="6" width="6" height="4.6" fill="#e4e4e4" stroke="#a0a0a0" stroke-width="0.7"/><path d="M8 2.4 L10.6 5" stroke="#a0a0a0" stroke-width="1"/></svg>
<div style="left:443.5px;top:160.6px;width:1px;height:10px;background:#aeaeae;"></div>
<div style="left:444.5px;top:160.6px;width:1px;height:10px;background:#dcdcdc;"></div>
<svg style="left:446.5px;top:159px" width="13" height="13" viewBox="0 0 13 13"><rect x="1.4" y="2" width="5" height="5" fill="#b4b4b4" stroke="#999" stroke-width="0.7"/><circle cx="8" cy="8" r="3" fill="#dcdcdc" stroke="#a0a0a0" stroke-width="0.8"/><path d="M6.4 2.6 C9 2.6 9.6 4 9.4 5.4" stroke="#a0a0a0" stroke-width="0.8" fill="none"/></svg>
<div style="left:461px;top:160.6px;width:1px;height:10px;background:#aeaeae;"></div>
<div style="left:462px;top:160.6px;width:1px;height:10px;background:#dcdcdc;"></div>
<svg style="left:464.5px;top:160px" width="11" height="11" viewBox="0 0 11 11"><path d="M1.6 1.8 L9.4 9 M9.4 1.8 L1.6 9" stroke="#111" stroke-width="1.25"/></svg>
<div style="left:479px;top:160.6px;width:1px;height:10px;background:#aeaeae;"></div>
<div style="left:480px;top:160.6px;width:1px;height:10px;background:#dcdcdc;"></div>
<svg style="left:482px;top:160px" width="12" height="11" viewBox="0 0 12 11"><ellipse cx="4.4" cy="6.4" rx="3.2" ry="2.8" fill="#9c9c9c"/><ellipse cx="7.6" cy="4.6" rx="3.2" ry="2.8" fill="#aaaaaa"/></svg>
<div style="left:497px;top:160.6px;width:1px;height:10px;background:#aeaeae;"></div>
<div style="left:498px;top:160.6px;width:1px;height:10px;background:#dcdcdc;"></div>
<svg style="left:500px;top:160px" width="12" height="11" viewBox="0 0 12 11"><path d="M1.4 9 L5 2 L7 6 L10.4 6 M5 2 L5 9.6" stroke="#b4b4b4" stroke-width="0.9" fill="none"/></svg>
<div style="left:514px;top:160.6px;width:1px;height:10px;background:#aeaeae;"></div>
<div style="left:515px;top:160.6px;width:1px;height:10px;background:#dcdcdc;"></div>
<svg style="left:517px;top:159px" width="13" height="13" viewBox="0 0 13 13"><circle cx="3.2" cy="3.2" r="2.2" fill="#1a2a9c"/><rect x="5" y="5.6" width="6" height="5.6" fill="#f4f4f4" stroke="#111" stroke-width="1"/><path d="M6.2 5.6 V4 C6.2 1.8 9.8 1.8 9.8 4 V5.6" stroke="#111" stroke-width="1.1" fill="none"/><rect x="6.6" y="7.4" width="3" height="2" fill="#e8d060"/></svg>
<div style="left:533px;top:160.6px;width:1px;height:10px;background:#aeaeae;"></div>
<div style="left:534px;top:160.6px;width:1px;height:10px;background:#dcdcdc;"></div>
<svg style="left:536px;top:159px" width="14" height="13" viewBox="0 0 14 13"><rect x="0.6" y="1" width="10" height="10" fill="#dedee8" stroke="#c0c0cc" stroke-width="0.6"/><ellipse cx="5.6" cy="6.2" rx="2.1" ry="2.5" fill="none" stroke="#1a2a9c" stroke-width="1.5"/><path d="M11.4 12.4 L12.8 12.4 L12.8 11Z" fill="#222"/></svg>
<div style="left:551px;top:160.6px;width:1px;height:10px;background:#aeaeae;"></div>
<div style="left:552px;top:160.6px;width:1px;height:10px;background:#dcdcdc;"></div>
<svg style="left:553.5px;top:159.5px" width="12" height="12" viewBox="0 0 12 12"><circle cx="6" cy="6" r="5.2" fill="#1c2aa0"/><path d="M3 2.4 L5.6 1.6 L5.8 4 L3.4 4.6Z M6.6 4.6 L9.4 4 L10 6.4 L7 7.2Z M2.4 6.2 L4.8 5.8 L5.4 8.6 L3 8.8Z M6.6 8.6 L8.8 8.2 L8 10.4 L6.4 10.8Z" fill="#f0f0ff"/></svg>
<div style="left:568px;top:160.6px;width:1px;height:10px;background:#aeaeae;"></div>
<div style="left:569px;top:160.6px;width:1px;height:10px;background:#dcdcdc;"></div>
<div style="left:571.6px;top:158.6px;width:12px;height:14px;background:#f3d368;"></div>
<svg style="left:571.6px;top:158.6px" width="12" height="14" viewBox="0 0 12 14"><path d="M3.6 2.6 V12 M8.4 2.6 V12" stroke="#b08418" stroke-width="1.4"/><path d="M2.4 3 H4.8 M7.2 3 H9.6" stroke="#7a5a10" stroke-width="1"/></svg>
<svg style="left:585.5px;top:159.5px" width="11" height="12" viewBox="0 0 11 12"><circle cx="5" cy="2.8" r="1.8" fill="#a0a0a0"/><path d="M5 4.6 V8 M5 8 L2.4 10.8 M5 8 L8 10.6 M1.6 6.4 H8.8" stroke="#a8a8a8" stroke-width="1" fill="none"/></svg>
<svg style="left:598px;top:159.5px" width="11" height="12" viewBox="0 0 11 12"><circle cx="5.6" cy="3" r="1.8" fill="none" stroke="#aaa" stroke-width="0.9"/><path d="M5.6 5 V8 M1.6 9.4 H9.6 M3 7 C3 11 8.4 11 8.4 7" stroke="#aaa" stroke-width="0.9" fill="none"/></svg>
<svg style="left:456.5px;top:175px" width="11" height="12" viewBox="0 0 11 12"><path d="M0.8 2.6 L2.8 0.8 L6.2 4 L4.2 6Z" fill="#1a1a1a"/><path d="M4.8 4.6 L8.8 9" stroke="#3a3a3a" stroke-width="2.2"/><path d="M5.8 5.6 L8.4 8.4" stroke="#e4e4e4" stroke-width="0.8"/><path d="M8.6 8.8 L9.9 10.2" stroke="#333" stroke-width="1.1"/></svg>
<div style="left:470px;top:175px;width:86px;height:12px;background:#e6e6e6;box-shadow:inset 1px 1px 0 #555,inset -1px -1px 0 #f4f4f4;"></div>
<span class="t" style="left:472.5px;top:176.64px;font-size:7.6px;line-height:9.12px;color:#111;transform:scaleX(0.79);">01 - Default</span>
<div style="left:547px;top:176px;width:8.4px;height:10px;background:#e2e2e2;box-shadow:inset 1px 1px 0 #f2f2f2,inset -1px -1px 0 #8a8a8a;"></div>
<svg style="left:547px;top:176px" width="8.4" height="10" viewBox="0 0 8 10"><path d="M2 4 L6 4 L4 6.6Z" fill="#111"/></svg>
<div style="left:559.7px;top:175.4px;width:49px;height:11px;background:#d0d0d0;box-shadow:inset 1px 1px 0 #f2f2f2,inset -1px -1px 0 #8a8a8a;"></div>
<span class="t" style="left:562.2px;top:176.54px;font-size:7.6px;line-height:9.12px;color:#111;transform:scaleX(0.81);">MaxwellMaterial</span>
<div style="left:416px;top:189px;width:186.6px;height:225px;border-left:2.6px solid #8e8e8e;border-top:1px solid #808080;box-sizing:border-box;"></div>
<div style="left:603px;top:189px;width:1px;height:225px;background:#e4e4e4;"></div>
<div style="left:607px;top:190px;width:3px;height:144.4px;background:#0a0a0a;"></div>
<div style="left:608px;top:334px;width:1.2px;height:56px;background:#555;"></div>
<div style="left:607px;top:389px;width:3px;height:22.4px;background:#0a0a0a;"></div>
<span class="t" style="left:424.4px;top:185.88px;font-size:7.2px;line-height:8.64px;color:#7c7c7c;transform:scaleX(0.77);">Put token file:</span>
<div style="left:418.6px;top:186px;width:186px;height:2px;background:#c7c7c7;"></div>
<div style="left:462.6px;top:189.6px;width:134px;height:6.8px;background:#e0e0e0;box-shadow:inset 1px 1px 0 #555,inset -1px -1px 0 #f4f4f4;"></div>
<div style="left:583px;top:189.8px;width:9.4px;height:6px;background:#d4d4d4;box-shadow:inset 1px 1px 0 #f2f2f2,inset -1px -1px 0 #8a8a8a;"></div>
<div style="left:419px;top:198.6px;width:178px;height:1px;background:#9a9a9a;"></div>
<div style="left:419px;top:199.6px;width:178px;height:1px;background:#e6e6e6;"></div>
<div style="left:419px;top:205.4px;width:178px;height:196px;border:1px solid #9c9c9c;box-sizing:border-box;box-shadow:1px 1px 0 #e6e6e6, inset 1px 1px 0 #e6e6e6;"></div>
<div style="left:419px;top:200.2px;width:40.6px;height:10.4px;background:#a9d5a9;box-shadow:0 0 1.5px 1px #a9d5a9;border-radius:1px;"></div>
<div style="left:423px;top:202px;width:7px;height:7px;background:#e6e6e6;box-shadow:inset 1px 1px 0 #666,inset -1px -1px 0 #fafafa;"></div>
<svg style="left:423px;top:202px" width="7" height="7" viewBox="0 0 7 7"><path d="M1.4 3.4 L2.9 5 L5.7 1.6" fill="none" stroke="#111" stroke-width="1.2"/></svg>
<span class="t" style="left:433.4px;top:201.24px;font-size:7.6px;line-height:9.12px;color:#111;transform:scaleX(0.77);">Emitter</span>
<span class="t" style="left:423px;top:212.04px;font-size:7.6px;line-height:9.12px;color:#111;transform:scaleX(0.78);">Load Preset:</span>
<div style="left:460px;top:213px;width:131.6px;height:11.4px;background:#e4e4e4;box-shadow:inset 1px 1px 0 #555,inset -1px -1px 0 #f4f4f4;"></div>
<span class="t" style="left:462px;top:214.34px;font-size:7.6px;line-height:9.12px;color:#111;transform:scaleX(0.65);">-------------------</span>
<div style="left:581.2px;top:214px;width:9.4px;height:9.4px;background:#dcdcdc;box-shadow:inset 1px 1px 0 #f2f2f2,inset -1px -1px 0 #8a8a8a;"></div>
<svg style="left:581.2px;top:214px" width="9.4" height="9.4" viewBox="0 0 8 8"><path d="M2 3 L6 3 L4 5.6Z" fill="#111"/></svg>
<div style="left:423.6px;top:231.6px;width:6.8px;height:6.8px;background:#ececec;border-radius:50%;box-shadow:inset 1px 1px 0 #777,inset -1px -1px 0 #fff;"></div>
<div style="left:425.8px;top:233.8px;width:2.4px;height:2.4px;background:#111;border-radius:50%;"></div>
<span class="t" style="left:433.4px;top:230.64px;font-size:7.6px;line-height:9.12px;color:#111;transform:scaleX(0.78);">Color + Luminance</span>
<div style="left:435.4px;top:246.8px;width:157px;height:46px;border:1px solid #9c9c9c;box-sizing:border-box;box-shadow:1px 1px 0 #e6e6e6, inset 1px 1px 0 #e6e6e6;"></div>
<div style="left:439px;top:243.4px;width:18.6px;height:7px;background:#c7c7c7;"></div>
<span class="t" style="left:441px;top:242.44px;font-size:7.6px;line-height:9.12px;color:#111;transform:scaleX(0.8);">Color</span>
<span class="t" style="left:454px;top:253.84px;font-size:7.6px;line-height:9.12px;color:#111;transform:scaleX(0.81);">Color Type:</span>
<div style="left:488px;top:253.4px;width:63.6px;height:10.6px;background:#e4e4e4;box-shadow:inset 1px 1px 0 #555,inset -1px -1px 0 #f4f4f4;"></div>
<span class="t" style="left:490px;top:254.34px;font-size:7.6px;line-height:9.12px;color:#111;transform:scaleX(0.7);">RGB</span>
<div style="left:542px;top:254.4px;width:8.6px;height:8.6px;background:#dcdcdc;box-shadow:inset 1px 1px 0 #f2f2f2,inset -1px -1px 0 #8a8a8a;"></div>
<svg style="left:542px;top:254.4px" width="8.6" height="8.6" viewBox="0 0 8 8"><path d="M2 3 L6 3 L4 5.6Z" fill="#111"/></svg>
<span class="t" style="left:444px;top:267.24px;font-size:7.6px;line-height:9.12px;color:#111;transform:scaleX(0.78);">Emission Color:</span>
<div style="left:488px;top:267.6px;width:36px;height:9.2px;background:#fdfdfd;box-shadow:inset 1px 1px 0 #444,inset -1px -1px 0 #888;"></div>
<span class="t" style="left:438.4px;top:278.64px;font-size:7.6px;line-height:9.12px;color:#9a9a9a;transform:scaleX(0.81);">Correlated Color:</span>
<div style="left:488px;top:278.6px;width:28px;height:8.8px;background:#d6d6d6;box-shadow:inset 1px 1px 0 #555,inset -1px -1px 0 #f4f4f4;"></div>
<span class="t" style="left:489.6px;top:279.04px;font-size:7.1px;line-height:8.52px;color:#8a8a8a;letter-spacing:-0.35px;">6500,0</span>
<svg style="left:517.5px;top:278.6px" width="5" height="8.8" viewBox="0 0 5 9" preserveAspectRatio="none"><path d="M0.6 3.4 L2.5 1 L4.4 3.4Z M0.6 5.6 L2.5 8 L4.4 5.6Z" fill="#111"/></svg>
<div style="left:525.4px;top:277.6px;width:36.6px;height:9.2px;background:#fdfdfd;box-shadow:inset 0 0 0 1px #333;"></div>
<div style="left:462.6px;top:299.6px;width:129.4px;height:47.2px;background:#a9d5a9;box-shadow:-2px 0 2px 0 #a9d5a9;"></div>
<div style="left:435.4px;top:298.4px;width:157px;height:49px;border:1px solid #9c9c9c;box-sizing:border-box;box-shadow:1px 1px 0 #e6e6e6, inset 1px 1px 0 #e6e6e6;"></div>
<div style="left:438.6px;top:295px;width:34px;height:7px;background:#c7c7c7;"></div>
<span class="t" style="left:440.4px;top:294.04px;font-size:7.6px;line-height:9.12px;color:#111;transform:scaleX(0.81);">Luminance</span>
<span class="t" style="left:470.4px;top:307.04px;font-size:7.6px;line-height:9.12px;color:#111;transform:scaleX(0.81);">Type:</span>
<div style="left:488px;top:306px;width:63.6px;height:11px;background:#e4efe4;box-shadow:inset 1px 1px 0 #555,inset -1px -1px 0 #f4f4f4;"></div>
<span class="t" style="left:490px;top:307.14px;font-size:7.6px;line-height:9.12px;color:#111;transform:scaleX(0.76);">Watts + Efficacy</span>
<div style="left:541.6px;top:307px;width:9px;height:9px;background:#dcdcdc;box-shadow:inset 1px 1px 0 #f2f2f2,inset -1px -1px 0 #8a8a8a;"></div>
<svg style="left:541.6px;top:307px" width="9" height="9" viewBox="0 0 8 8"><path d="M2 3 L6 3 L4 5.6Z" fill="#111"/></svg>
<span class="t" style="left:466.8px;top:319.44px;font-size:7.6px;line-height:9.12px;color:#111;transform:scaleX(0.88);">Watts:</span>
<div style="left:488px;top:320.4px;width:28px;height:8.4px;background:linear-gradient(90deg,#d4e6d4,#f2f8f2 75%);box-shadow:inset 1px 1px 0 #555,inset -1px -1px 0 #f4f4f4;"></div>
<span class="t" style="left:489.6px;top:320.64px;font-size:7.1px;line-height:8.52px;color:#111;letter-spacing:-0.35px;">40,0</span>
<svg style="left:517.5px;top:320.4px" width="5" height="8.4" viewBox="0 0 5 9" preserveAspectRatio="none"><path d="M0.6 3.4 L2.5 1 L4.4 3.4Z M0.6 5.6 L2.5 8 L4.4 5.6Z" fill="#111"/></svg>
<span class="t" style="left:526px;top:319.44px;font-size:7.6px;line-height:9.12px;color:#111;transform:scaleX(0.82);">Efficacy:</span>
<div style="left:551.6px;top:320.4px;width:27.4px;height:8.4px;background:linear-gradient(90deg,#d4e6d4,#f2f8f2 75%);box-shadow:inset 1px 1px 0 #555,inset -1px -1px 0 #f4f4f4;"></div>
<span class="t" style="left:553.2px;top:320.64px;font-size:7.1px;line-height:8.52px;color:#111;letter-spacing:-0.35px;">17,6</span>
<svg style="left:580.5px;top:320.4px" width="5" height="8.4" viewBox="0 0 5 9" preserveAspectRatio="none"><path d="M0.6 3.4 L2.5 1 L4.4 3.4Z M0.6 5.6 L2.5 8 L4.4 5.6Z" fill="#111"/></svg>
<span class="t" style="left:455px;top:331.24px;font-size:7.6px;line-height:9.12px;color:#8fa88f;transform:scaleX(0.77);">Luminance:</span>
<div style="left:488px;top:332.2px;width:28px;height:8.4px;background:#bfe0bf;box-shadow:inset 1px 1px 0 #555,inset -1px -1px 0 #f4f4f4;"></div>
<span class="t" style="left:489.6px;top:332.44px;font-size:7.1px;line-height:8.52px;color:#8a8a8a;letter-spacing:-0.35px;">100,0</span>
<svg style="left:517.5px;top:332.2px" width="5" height="8.4" viewBox="0 0 5 9" preserveAspectRatio="none"><path d="M0.6 3.4 L2.5 1 L4.4 3.4Z M0.6 5.6 L2.5 8 L4.4 5.6Z" fill="#111"/></svg>
<span class="t" style="left:537px;top:331.24px;font-size:7.6px;line-height:9.12px;color:#8fa88f;transform:scaleX(0.79);">Unit:</span>
<div style="left:552px;top:332px;width:35px;height:10.6px;background:#b4dcb4;box-shadow:inset 1px 1px 0 #555,inset -1px -1px 0 #f4f4f4;"></div>
<span class="t" style="left:554px;top:332.94px;font-size:7.6px;line-height:9.12px;color:#999;transform:scaleX(0.69);">Lumen</span>
<div style="left:577.4px;top:333px;width:8.6px;height:8.6px;background:#dcdcdc;box-shadow:inset 1px 1px 0 #f2f2f2,inset -1px -1px 0 #8a8a8a;"></div>
<svg style="left:577.4px;top:333px" width="8.6" height="8.6" viewBox="0 0 8 8"><path d="M2 3 L6 3 L4 5.6Z" fill="#999"/></svg>
<div style="left:423.2px;top:350.6px;width:6.8px;height:6.8px;background:#ececec;border-radius:50%;box-shadow:inset 1px 1px 0 #777,inset -1px -1px 0 #fff;"></div>
<span class="t" style="left:433.4px;top:349.64px;font-size:7.6px;line-height:9.12px;color:#111;transform:scaleX(0.8);">Temperature</span>
<span class="t" style="left:453px;top:364.44px;font-size:7.6px;line-height:9.12px;color:#9a9a9a;transform:scaleX(0.79);">Emission Temperature:</span>
<div style="left:516.8px;top:365px;width:29px;height:8.2px;background:#d6d6d6;box-shadow:inset 1px 1px 0 #555,inset -1px -1px 0 #f4f4f4;"></div>
<span class="t" style="left:518.4px;top:365.14px;font-size:7.1px;line-height:8.52px;color:#8a8a8a;letter-spacing:-0.35px;">6500,0</span>
<svg style="left:547.3px;top:365px" width="5" height="8.2" viewBox="0 0 5 9" preserveAspectRatio="none"><path d="M0.6 3.4 L2.5 1 L4.4 3.4Z M0.6 5.6 L2.5 8 L4.4 5.6Z" fill="#111"/></svg>
<div style="left:423.2px;top:375.3px;width:6.8px;height:6.8px;background:#ececec;border-radius:50%;box-shadow:inset 1px 1px 0 #777,inset -1px -1px 0 #fff;"></div>
<span class="t" style="left:433.4px;top:374.34px;font-size:7.6px;line-height:9.12px;color:#111;transform:scaleX(0.85);">MXI/HDR Texture</span>
<div style="left:455.4px;top:384.4px;width:124px;height:9px;background:#e2e2e2;box-shadow:inset 1px 1px 0 #555,inset -1px -1px 0 #f4f4f4;"></div>
<div style="left:581px;top:383.4px;width:9px;height:10.4px;background:#d0d0d0;box-shadow:inset 1px 1px 0 #f2f2f2,inset -1px -1px 0 #8a8a8a;"></div>
<span class="t" style="left:582.9px;top:386px;font-size:6px;line-height:7.2px;color:#666;">...</span>
<div style="left:419px;top:408.4px;width:178px;height:1px;background:#9a9a9a;"></div>
<div style="left:420px;top:404px;width:46px;height:8px;background:#c7c7c7;"></div>
<div style="left:424px;top:405.8px;width:6.6px;height:6.6px;background:#e6e6e6;box-shadow:inset 1px 1px 0 #666,inset -1px -1px 0 #fafafa;"></div>
<span class="t" style="left:434px;top:405.04px;font-size:7.6px;line-height:9.12px;color:#111;transform:scaleX(0.78);">Displacement</span>
<div style="left:407px;top:411.6px;width:211px;height:3px;background:linear-gradient(#a8a8a8,#5c5c5c 60%);"></div>
<div style="left:406.7px;top:0px;width:1.8px;height:414px;background:#72728c;"></div>
<div style="left:616px;top:150px;width:2px;height:264px;background:#bcbcc4;"></div>
<span class="t" style="left:445px;top:7.3px;font-size:11.6px;line-height:18px;color:#1a1a1a;font-weight:400;font-family:&quot;Liberation Sans&quot;,&quot;Noto Sans CJK SC&quot;,sans-serif;">思缘设计论坛</span>
<span class="t" style="left:521.6px;top:12.96px;font-size:7.4px;line-height:8.88px;color:#3c3c3c;font-weight:bold;transform:scaleX(1.06);">WWW.MISSYUAN.COM</span>
</div></body></html>
